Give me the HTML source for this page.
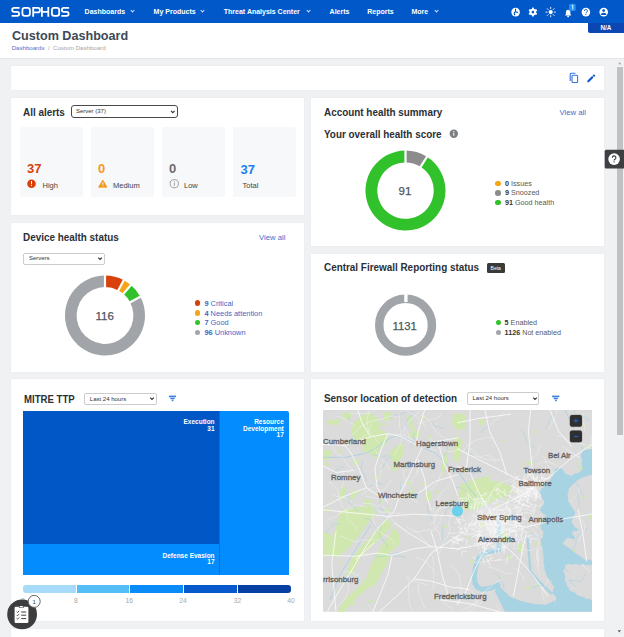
<!DOCTYPE html>
<html><head><meta charset="utf-8">
<style>
*{margin:0;padding:0;box-sizing:border-box}
html,body{width:624px;height:637px;overflow:hidden;background:#eff1f3;font-family:"Liberation Sans",sans-serif;position:relative}
.a{position:absolute;white-space:nowrap}
.hdr{left:0;top:0;width:624px;height:23px;background:#0158c8}
.nav{color:#fff;font-weight:bold;font-size:7px;top:7px;line-height:9px}
.chev{display:inline-block;width:3px;height:3px;border-right:1px solid #dfe8f8;border-bottom:1px solid #dfe8f8;transform:rotate(45deg);position:absolute}
.card{background:#fff;position:absolute;box-shadow:0 0 1.2px rgba(40,50,70,0.07)}
.h{font-weight:bold;font-size:11px;color:#2b2f36;line-height:12px;transform:scaleX(0.9);transform-origin:0 0}
.tile{position:absolute;background:#f7f8fa;border-radius:2px;top:127px;width:63.5px;height:70px}
.big{font-weight:bold;font-size:13px;line-height:14px;position:absolute}
.lbl{font-size:7.5px;color:#444;position:absolute;line-height:9px}
.sel{position:absolute;background:#fff;font-size:6px;color:#333;line-height:9px}
.lg{font-size:7.2px;line-height:9px;color:#3a67c7}
.lg b{font-weight:bold}
.lg[style*="585858"] b{color:#333}
.dot{display:inline-block;width:5.6px;height:5.6px;border-radius:50%;position:absolute}
.va{font-size:8px;color:#3a6fd0;line-height:10px}
</style></head><body>
<!-- header -->
<div class="a hdr"></div>
<svg class="a" style="left:0;top:0" width="80" height="23" viewBox="0 0 80 23"><g fill="none" stroke="#fff" stroke-width="1.8">
<path d="M19.6,7.9 H14.2 Q12.2,7.9 12.2,9.8 V10 Q12.2,11.9 14.2,11.9 H17.2 Q19.1,11.9 19.1,13.9 V14 Q19.1,15.9 17.2,15.9 H11.6"/>
<rect x="22.4" y="7.9" width="7.5" height="8" rx="2.3"/>
<path d="M33.2,16.8 V7.9 H37.9 Q39.9,7.9 39.9,9.9 V10.4 Q39.9,12.3 37.9,12.3 H33.2"/>
<path d="M41.9,7 V16.8 M48.3,7 V16.8 M41.9,11.9 H48.3"/>
<rect x="51.9" y="7.9" width="7.3" height="8" rx="2.3"/>
<path d="M69.1,7.9 H63.9 Q61.9,7.9 61.9,9.8 V10 Q61.9,11.9 63.9,11.9 H66.7 Q68.6,11.9 68.6,13.9 V14 Q68.6,15.9 66.7,15.9 H61.3"/>
</g></svg>
<div class="a nav" style="left:84.6px">Dashboards</div><span class="chev" style="left:131px;top:9px"></span>
<div class="a nav" style="left:153.6px">My Products</div><span class="chev" style="left:201px;top:9px"></span>
<div class="a nav" style="left:223.8px">Threat Analysis Center</div><span class="chev" style="left:307px;top:9px"></span>
<div class="a nav" style="left:329.6px">Alerts</div>
<div class="a nav" style="left:367.3px">Reports</div>
<div class="a nav" style="left:411.5px">More</div><span class="chev" style="left:434.5px;top:9px"></span>


<!-- title area -->
<div class="a" style="left:0;top:23px;width:624px;height:34.6px;background:#fff;box-shadow:0 0.8px 0.6px #e3e5e8"></div>
<div class="a" style="left:11.5px;top:28px;font-size:13.4px;font-weight:bold;color:#3d4956;line-height:15px;transform:scaleX(0.94);transform-origin:0 0">Custom Dashboard</div>
<div class="a" style="left:11.7px;top:43.8px;font-size:6.1px;line-height:7px;color:#4a72c8">Dashboards <span style="color:#a5a5a5">&nbsp;/&nbsp; Custom Dashboard</span></div>

<!-- N/A badge -->
<div class="a" style="left:588px;top:23px;width:36px;height:10px;background:#0b46b2;border-radius:0 0 0 2px;color:#fff;font-weight:bold;font-size:6.3px;line-height:10px;text-align:center">N/A</div>

<!-- toolbar card -->
<div class="card" style="left:11px;top:66px;width:593px;height:24px"></div>

<!-- All alerts -->
<div class="card" style="left:11px;top:97.8px;width:293px;height:117.4px"></div>
<div class="a h" style="left:23px;top:105.5px">All alerts</div>
<div class="sel" style="left:71.4px;top:105.4px;width:107px;height:12.4px;border:1.3px solid #4a4a4a;border-radius:3px;padding-left:3.5px;line-height:11.4px">Server (37)</div>
<div class="tile" style="left:19.5px"></div>
<div class="tile" style="left:90.5px"></div>
<div class="tile" style="left:161.5px"></div>
<div class="tile" style="left:232.5px"></div>
<div class="big" style="left:27px;top:162px;color:#d7420a">37</div>
<div class="big" style="left:98px;top:162px;color:#f59a1b">0</div>
<div class="big" style="left:169px;top:162px;color:#6b6b6b">0</div>
<div class="big" style="left:240.5px;top:163px;color:#1a7ff0">37</div>
<div class="lbl" style="left:42.5px;top:181px">High</div>
<div class="lbl" style="left:113px;top:181px">Medium</div>
<div class="lbl" style="left:184px;top:181px">Low</div>
<div class="lbl" style="left:242.5px;top:181px">Total</div>

<!-- Account health -->
<div class="card" style="left:311.3px;top:97.8px;width:292.7px;height:148.4px"></div>
<div class="a h" style="left:323.8px;top:105.7px">Account health summary</div>
<div class="a va" style="left:559.5px;top:108px;font-size:7.7px">View all</div>
<div class="a h" style="left:323.8px;top:127.5px">Your overall health score</div>

<!-- Device health -->
<div class="card" style="left:11px;top:222.5px;width:293px;height:149px"></div>
<div class="a h" style="left:23px;top:230.9px">Device health status</div>
<div class="a va" style="left:259px;top:233px;font-size:7.7px">View all</div>
<div class="sel" style="left:23.4px;top:252.6px;width:82px;height:12px;border:1px solid #ccc;border-radius:2px;padding-left:4.5px;line-height:9px">Servers</div>

<!-- Firewall -->
<div class="card" style="left:311.3px;top:254px;width:292.7px;height:117.5px"></div>
<div class="a h" style="left:323.8px;top:261.4px">Central Firewall Reporting status</div>
<div class="a" style="left:486.6px;top:263px;width:18.3px;height:10px;background:#3a3a3a;border-radius:1.5px;color:#fff;font-size:5px;line-height:10px;text-align:center">Beta</div>

<!-- MITRE -->
<div class="card" style="left:11px;top:378.7px;width:293px;height:242.5px"></div>
<div class="a h" style="left:24px;top:392.7px;font-size:10.7px">MITRE TTP</div>
<div class="sel" style="left:84.3px;top:392.6px;width:72.4px;height:12.2px;line-height:10.2px;border:1px solid #ccc;border-radius:2px;padding-left:4.5px">Last 24 hours</div>

<!-- Sensor -->
<div class="card" style="left:311.3px;top:378.7px;width:292.7px;height:242.5px"></div>
<div class="a h" style="left:323.7px;top:391.9px">Sensor location of detection</div>
<div class="sel" style="left:467px;top:392.4px;width:72.4px;height:12.4px;line-height:10.4px;border:1px solid #ccc;border-radius:2px;padding-left:4.5px">Last 24 hours</div>


<!-- treemap -->
<div class="a" style="left:23.2px;top:410.8px;width:265.8px;height:164.2px;background:#028cfe;border-radius:0 2px 0 0;overflow:hidden">
 <div class="a" style="left:0;top:0;width:196.2px;height:133.6px;background:#0257c7"></div>
 <div class="a" style="left:196.2px;top:0;width:0.7px;height:164.2px;background:#2a66ad"></div>
</div>
<div class="a" style="left:150px;top:419.2px;width:64.6px;text-align:right;color:#fff;font-weight:bold;font-size:6.5px;line-height:6.4px">Execution<br>31</div>
<div class="a" style="left:220px;top:419.2px;width:63.8px;text-align:right;color:#fff;font-weight:bold;font-size:6.5px;line-height:6.4px">Resource<br>Development<br>17</div>
<div class="a" style="left:120px;top:553px;width:94.6px;text-align:right;color:#fff;font-weight:bold;font-size:6.5px;line-height:6.4px">Defense Evasion<br>17</div>
<!-- color scale -->
<div class="a" style="left:23.2px;top:584.8px;width:267.8px;height:7.8px;border-radius:3px;overflow:hidden;background:#fff">
 <div class="a" style="left:0;top:0;width:52.6px;height:7.8px;background:#a6dcf9"></div>
 <div class="a" style="left:53.6px;top:0;width:52.4px;height:7.8px;background:#55bef8"></div>
 <div class="a" style="left:107px;top:0;width:52.9px;height:7.8px;background:#0a8cf8"></div>
 <div class="a" style="left:160.9px;top:0;width:53.4px;height:7.8px;background:#0759cc"></div>
 <div class="a" style="left:215.3px;top:0;width:52.5px;height:7.8px;background:#083fa3"></div>
</div>
<div class="a" style="left:60.8px;top:597px;width:30px;text-align:center;font-size:6.8px;line-height:8px;color:#a8a8a8">8</div>
<div class="a" style="left:114.2px;top:597px;width:30px;text-align:center;font-size:6.8px;line-height:8px;color:#a8a8a8">16</div>
<div class="a" style="left:168.1px;top:597px;width:30px;text-align:center;font-size:6.8px;line-height:8px;color:#a8a8a8">24</div>
<div class="a" style="left:222.5px;top:597px;width:30px;text-align:center;font-size:6.8px;line-height:8px;color:#a8a8a8">32</div>
<div class="a" style="left:276px;top:597px;width:30px;text-align:center;font-size:6.8px;line-height:8px;color:#a8a8a8">40</div>

<!--MAP--><svg class="a" style="left:323px;top:410.2px" width="269" height="201.6" viewBox="323 410.2 269 201.6">
<rect x="323" y="410" width="269" height="202" fill="#dbdbdb"/>
<polygon fill="#d0e8b0" points="340.6,510.5 354.6,507.9 372.2,505.3 375.7,514.1 365.2,526.4 356.4,538.7 347.6,549.2 337.1,558.0 328.3,556.2 331.8,538.7 337.1,524.6"/>
<polygon fill="#d0e8b0" points="386.3,519.3 392.4,524.6 381.0,538.7 366.9,551.0 359.9,559.8 352.9,573.8 345.8,575.6 351.1,559.8 361.7,545.7 375.7,531.6"/>
<polygon fill="#d0e8b0" points="393.3,528.1 400.3,535.1 398.6,545.7 389.8,552.7 388.0,563.3 381.0,573.8 375.7,584.4 363.4,591.4 352.9,601.9 344.1,612.0 337.1,612.0 345.8,598.4 358.1,587.9 366.9,577.3 370.5,566.8 377.5,552.7 382.8,543.9 389.8,535.1"/>
<polygon fill="#d0e8b0" points="323.0,531.6 331.8,535.1 330.0,552.7 323.0,558.0"/>
<polygon fill="#d0e8b0" points="352.9,423.4 360.3,416.0 370.8,413.0 378.2,419.0 379.7,429.4 385.7,432.4 388.7,441.3 379.7,448.8 376.7,459.3 370.8,454.8 363.3,451.8 361.8,442.8 354.3,439.9 351.4,432.4"/>
<polygon fill="#d0e8b0" points="342.4,413.0 352.9,413.0 351.0,419.0 343.0,420.0"/>
<polygon fill="#d0e8b0" points="327.5,421.0 340.9,419.0 339.0,425.0 328.0,425.0"/>
<polygon fill="#d0e8b0" points="382.7,413.0 391.7,412.0 392.0,420.4 384.0,421.0"/>
<polygon fill="#d0e8b0" points="388.7,453.3 397.6,445.8 403.0,442.8 403.0,454.8 397.6,463.7 394.6,472.7 391.7,469.7 393.1,459.3"/>
<polygon fill="#d0e8b0" points="323.0,450.3 332.0,450.3 329.0,459.3 323.0,460.7"/>
<polygon fill="#d0e8b0" points="339.4,493.6 345.4,484.6 346.9,490.6 340.9,501.0"/>
<polygon fill="#d0e8b0" points="349.9,496.6 355.8,487.6 357.3,495.0 351.4,501.0"/>
<polygon fill="#d0e8b0" points="363.3,499.6 370.8,499.0 370.8,505.0 364.0,505.0"/>
<polygon fill="#d0e8b0" points="352.9,459.3 358.8,460.0 358.0,465.2 353.0,465.0"/>
<polygon fill="#d0e8b0" points="453.4,413.1 465.9,414.7 465.9,428.8 458.1,430.4 451.8,424.1"/>
<polygon fill="#d0e8b0" points="454.9,435.1 462.8,441.4 459.7,460.2 454.9,463.4 453.4,454.0"/>
<polygon fill="#d0e8b0" points="445.5,454.0 448.7,447.7 447.1,463.4 442.4,475.9 440.8,469.7"/>
<polygon fill="#d0e8b0" points="459.7,485.4 475.4,479.1 490.0,475.9 490.0,493.2 481.6,504.2 467.5,510.0 459.7,504.2"/>
<polygon fill="#d0e8b0" points="400.0,444.5 403.0,446.0 403.0,457.1 400.0,457.0"/>
<polygon fill="#d0e8b0" points="406.3,416.3 410.0,415.0 415.7,430.4 411.0,430.0"/>
<polygon fill="#d0e8b0" points="409.4,432.0 420.4,430.4 418.0,438.3 410.0,437.0"/>
<polygon fill="#d0e8b0" points="478.5,419.4 484.8,420.0 484.0,425.7 479.0,425.0"/>
<polygon fill="#d0e8b0" points="425.1,491.6 431.0,492.0 431.4,501.0 426.0,500.0"/>
<polygon fill="#d0e8b0" points="466.0,484.0 480.0,480.0 500.0,482.0 512.0,487.0 508.0,496.0 496.0,500.0 484.0,506.0 472.0,511.0 462.0,509.0"/>
<polygon fill="#d0e8b0" points="500.0,535.0 506.0,532.0 509.0,540.0 503.0,543.0"/>
<polygon fill="#d0e8b0" points="517.0,545.0 523.0,543.0 524.0,552.0 518.0,553.0"/>
<g fill="#d0e8b0">
<circle cx="336.0" cy="590.6" r="0.9"/>
<circle cx="352.7" cy="603.3" r="2.2"/>
<circle cx="464.3" cy="410.5" r="1.1"/>
<circle cx="468.4" cy="537.9" r="1.6"/>
<circle cx="590.2" cy="517.0" r="2.0"/>
<circle cx="580.5" cy="425.6" r="2.2"/>
<circle cx="383.2" cy="424.6" r="1.8"/>
<circle cx="327.1" cy="464.3" r="2.2"/>
<circle cx="375.8" cy="419.7" r="1.9"/>
<circle cx="579.1" cy="464.0" r="1.3"/>
<circle cx="334.1" cy="501.7" r="1.2"/>
<circle cx="412.0" cy="492.9" r="2.2"/>
<circle cx="523.5" cy="464.3" r="1.4"/>
<circle cx="468.3" cy="487.4" r="1.0"/>
<circle cx="527.7" cy="588.1" r="1.9"/>
<circle cx="387.3" cy="511.2" r="2.2"/>
<circle cx="509.6" cy="557.5" r="2.2"/>
<circle cx="346.4" cy="535.4" r="0.8"/>
<circle cx="515.7" cy="492.0" r="1.6"/>
<circle cx="507.2" cy="499.4" r="1.7"/>
<circle cx="445.5" cy="526.7" r="1.5"/>
<circle cx="497.1" cy="505.1" r="1.3"/>
<circle cx="469.9" cy="486.7" r="2.0"/>
<circle cx="535.9" cy="585.6" r="1.3"/>
<circle cx="340.2" cy="607.1" r="1.2"/>
<circle cx="500.4" cy="576.9" r="0.9"/>
<circle cx="537.5" cy="544.2" r="2.1"/>
<circle cx="528.9" cy="463.0" r="2.0"/>
<circle cx="481.6" cy="525.3" r="2.2"/>
<circle cx="340.7" cy="563.0" r="1.3"/>
<circle cx="378.1" cy="444.2" r="1.3"/>
<circle cx="504.2" cy="440.8" r="1.7"/>
<circle cx="370.8" cy="601.4" r="2.0"/>
<circle cx="409.6" cy="483.1" r="2.0"/>
<circle cx="438.1" cy="492.8" r="1.8"/>
<circle cx="423.9" cy="483.7" r="1.7"/>
<circle cx="463.6" cy="471.1" r="1.7"/>
<circle cx="397.0" cy="468.7" r="1.4"/>
<circle cx="353.1" cy="538.2" r="1.8"/>
<circle cx="369.9" cy="514.5" r="0.8"/>
<circle cx="358.1" cy="508.7" r="1.7"/>
<circle cx="490.5" cy="515.7" r="1.9"/>
<circle cx="391.0" cy="522.4" r="0.8"/>
<circle cx="392.9" cy="529.3" r="1.2"/>
<circle cx="469.5" cy="595.2" r="1.2"/>
<circle cx="394.4" cy="498.5" r="1.5"/>
<circle cx="455.7" cy="427.9" r="1.0"/>
<circle cx="580.8" cy="468.7" r="1.9"/>
<circle cx="424.1" cy="418.4" r="1.9"/>
<circle cx="583.9" cy="497.1" r="1.7"/>
<circle cx="392.1" cy="458.2" r="2.0"/>
<circle cx="357.8" cy="534.9" r="2.2"/>
<circle cx="340.0" cy="451.0" r="2.0"/>
<circle cx="344.5" cy="500.0" r="1.4"/>
<circle cx="434.6" cy="599.0" r="1.7"/>
<circle cx="535.9" cy="431.8" r="1.6"/>
<circle cx="574.5" cy="551.6" r="1.4"/>
<circle cx="590.6" cy="445.6" r="0.9"/>
<circle cx="430.0" cy="437.3" r="1.9"/>
<circle cx="325.6" cy="456.9" r="1.1"/>
<circle cx="468.7" cy="597.0" r="1.2"/>
<circle cx="411.8" cy="488.3" r="1.4"/>
<circle cx="347.2" cy="581.3" r="1.6"/>
<circle cx="327.2" cy="510.4" r="2.0"/>
<circle cx="381.0" cy="501.8" r="2.0"/>
<circle cx="376.8" cy="477.8" r="2.0"/>
<circle cx="471.1" cy="561.1" r="2.0"/>
<circle cx="360.7" cy="492.2" r="0.9"/>
<circle cx="491.5" cy="474.7" r="1.1"/>
<circle cx="587.2" cy="447.6" r="1.6"/>
</g>
<g fill="none" stroke="#a9d1e2" stroke-width="0.6" stroke-linejoin="round">
<path d="M390.1,418.9 L391.3,417.3 L394.0,416.2 L396.2,415.1 L400.2,415.3 L403.0,413.5 L406.1,412.5 L408.6,411.3 L410.6,411.1 L412.7,411.9"/>
<path d="M368.7,486.6 L371.4,486.3 L375.0,485.1 L377.8,483.3 L380.6,483.6 L383.0,485.5"/>
<path d="M427.2,504.3 L427.4,507.7 L428.0,509.9 L428.0,512.1 L429.1,515.6 L431.3,517.5 L432.6,520.9"/>
<path d="M365.8,481.3 L365.9,478.1 L365.1,475.3 L362.7,472.4 L361.0,468.9 L361.8,465.8 L362.5,461.9"/>
<path d="M466.8,491.6 L465.0,490.4 L462.4,488.6 L459.0,487.7 L455.7,487.3"/>
<path d="M475.7,472.8 L472.5,474.2 L470.8,475.9 L468.7,476.4"/>
<path d="M568.8,572.6 L567.4,570.4 L565.6,569.1"/>
<path d="M531.5,588.3 L533.7,587.7 L537.0,586.2 L540.7,585.5 L543.0,582.9"/>
<path d="M384.2,510.6 L381.3,509.4 L380.1,507.6 L379.3,504.4 L380.6,500.8 L382.1,497.8 L385.1,496.3"/>
<path d="M333.0,474.3 L334.1,472.5 L336.1,470.5 L339.4,469.0 L341.0,467.5 L343.8,467.2"/>
<path d="M573.2,549.7 L574.5,546.7 L575.9,543.6 L575.9,540.3 L577.5,537.2 L578.6,535.0 L581.9,533.4 L584.1,532.5 L586.4,529.9 L587.3,527.5"/>
<path d="M582.2,443.9 L581.7,446.5 L582.8,449.8"/>
<path d="M388.0,514.1 L385.8,515.5 L383.5,515.5 L380.9,515.3 L378.2,513.8 L376.7,512.0 L375.3,509.1 L373.5,506.0 L373.4,503.8"/>
<path d="M400.8,482.8 L400.1,485.3 L400.8,487.8 L399.9,490.0"/>
<path d="M442.7,525.0 L443.4,526.9 L442.3,530.2 L443.1,533.5 L441.8,536.4 L442.2,539.3 L442.7,541.6 L443.0,543.6"/>
<path d="M410.9,447.3 L411.1,445.0 L413.4,442.2 L414.1,440.2 L413.4,436.6 L414.8,432.9"/>
<path d="M431.5,420.2 L432.0,422.5 L433.4,425.3 L436.4,426.9 L439.3,426.9 L441.0,428.3 L443.9,428.4"/>
<path d="M374.3,556.0 L377.9,556.7 L380.2,557.1 L382.1,556.3 L385.9,555.8 L387.4,554.5 L389.7,554.3 L392.4,554.9 L395.6,553.2 L398.7,552.6"/>
<path d="M449.1,519.6 L446.4,517.0 L445.2,513.2 L446.3,510.2 L447.8,508.7 L450.6,507.0 L452.8,504.7"/>
<path d="M579.3,507.1 L578.9,504.1 L579.1,500.4 L578.0,497.1 L577.8,494.8 L577.9,491.7"/>
<path d="M576.7,482.7 L577.2,484.9 L579.5,487.9 L580.7,489.8 L580.9,492.3 L582.7,494.7 L585.2,496.3"/>
<path d="M472.0,455.8 L469.3,453.1 L467.0,450.2 L465.4,446.9"/>
<path d="M359.1,511.6 L357.1,510.8 L355.5,507.7 L352.3,505.8 L350.2,505.0 L348.6,502.3 L348.2,500.0 L348.7,498.0 L348.3,495.3 L346.0,493.1"/>
<path d="M380.3,470.6 L381.0,468.5 L383.0,467.2 L384.5,464.1 L385.2,461.4 L387.5,458.7 L389.3,457.7"/>
<path d="M391.8,458.3 L389.1,456.1 L385.9,455.9 L383.2,457.3 L381.0,457.5 L378.1,455.8 L375.8,455.3 L372.1,454.9"/>
<path d="M479.4,432.9 L481.6,431.8 L483.9,428.7 L486.9,427.3"/>
<path d="M542.3,536.0 L540.2,536.3 L536.9,536.2 L533.2,535.6 L530.9,533.1"/>
<path d="M443.7,456.3 L445.4,454.3 L446.6,450.7 L447.5,448.8 L447.4,446.1 L447.2,442.9 L446.6,440.3 L444.1,438.4"/>
<path d="M412.8,414.1 L411.3,415.9 L409.3,417.5 L407.6,419.9 L406.8,423.0 L405.6,426.7 L403.9,427.8 L400.7,429.5"/>
<path d="M543.4,557.5 L542.5,554.2 L540.8,551.2"/>
<path d="M503.7,588.5 L503.7,586.0 L502.8,583.5 L501.3,582.2 L500.3,579.4 L499.0,576.6 L497.5,574.8 L495.0,574.1"/>
<path d="M406.0,556.8 L403.7,557.4 L400.7,556.4 L398.0,556.3 L394.0,556.3 L390.7,555.4"/>
<path d="M571.0,579.4 L570.7,581.9 L571.9,583.9 L574.5,586.1 L577.2,586.9"/>
<path d="M376.9,531.8 L377.3,529.3 L376.3,527.3 L374.4,526.3 L372.4,523.8 L371.8,521.9 L369.7,519.4 L367.1,518.8 L364.8,519.9"/>
<path d="M556.4,415.5 L553.8,415.0 L551.2,416.3 L549.7,419.2 L549.0,422.1 L548.1,424.4 L547.4,426.3 L544.9,428.2"/>
<path d="M588.6,421.3 L587.8,419.2 L585.7,418.0 L582.5,416.1 L580.0,415.1 L576.6,414.7 L574.8,413.3 L574.0,410.2"/>
<path d="M347.2,415.6 L348.7,417.5 L349.4,420.0 L349.8,423.4"/>
<path d="M567.6,581.8 L570.5,580.9 L573.1,580.5 L575.9,581.4 L579.7,581.6 L582.8,579.9 L584.2,577.0 L585.4,573.4"/>
<path d="M339.1,524.0 L335.9,523.8 L333.5,524.6 L331.3,526.4 L330.0,528.4 L327.5,530.5 L325.2,533.7"/>
<path d="M381.3,525.0 L381.2,528.6 L379.8,530.4 L379.0,532.4 L380.2,536.0 L381.8,538.0 L383.7,541.4 L385.4,542.7 L387.2,545.9 L387.6,548.0"/>
<path d="M531.2,498.7 L528.7,498.0 L526.6,498.8 L524.7,498.2 L523.2,496.5"/>
<path d="M521.0,429.7 L522.7,431.9 L524.2,434.9 L525.7,437.1 L525.8,440.3 L527.3,443.2 L529.4,444.2 L532.0,445.8 L534.3,448.4"/>
</g>
<polygon fill="#a8d3e3" points="592.0,449.0 589.9,449.8 587.7,449.5 585.6,450.1 583.4,450.2 582.3,452.2 581.3,454.3 580.6,456.5 581.7,458.7 582.2,461.0 581.7,463.4 581.7,466.1 582.9,468.6 581.5,470.5 579.8,472.1 577.7,473.3 575.0,473.4 573.1,475.2 570.7,476.1 568.3,474.7 565.6,474.4 564.1,471.8 562.7,469.2 560.5,468.4 558.1,468.1 554.6,469.8 554.8,472.0 553.6,474.0 553.4,476.1 551.3,477.6 550.3,479.9 548.8,481.9 547.1,483.0 545.7,484.6 545.1,486.8 543.1,487.7 541.0,489.7 539.6,492.3 540.8,495.0 541.5,497.4 542.8,499.5 544.1,501.6 544.2,504.2 542.2,505.7 541.2,508.1 539.6,510.0 541.1,511.8 542.6,513.4 544.5,514.6 546.5,515.8 544.7,517.2 544.4,519.6 542.6,521.0 542.0,523.2 540.8,525.0 540.5,527.2 541.1,529.3 542.9,531.1 543.3,533.2 543.1,535.4 542.8,537.5 540.8,538.9 540.8,541.1 541.4,543.4 541.5,545.8 542.5,548.0 542.6,550.4 543.1,552.7 543.5,554.7 543.7,556.8 543.5,558.9 543.7,560.9 543.3,563.0 544.2,565.0 544.4,567.6 544.5,570.2 545.8,572.5 546.2,574.7 546.9,576.8 548.4,578.5 549.6,580.3 551.4,581.5 551.7,583.9 552.9,585.6 554.8,586.7 553.3,588.6 553.0,590.9 552.2,593.1 553.9,595.3 556.1,597.0 556.4,599.1 555.0,601.0 555.2,603.2 555.4,605.3 554.8,607.3 556.8,609.3 557.4,612.0 559.4,612.0 561.5,612.0 563.5,612.0 565.5,612.0 567.6,612.0 569.6,612.0 571.6,612.0 573.7,612.0 575.7,612.0 577.8,612.0 579.8,612.0 581.8,612.0 583.9,612.0 585.9,612.0 587.9,612.0 590.0,612.0 592.0,612.0 592.0,609.8 592.0,607.6 592.0,605.4 592.0,603.2 592.0,601.0 590.4,599.7 588.6,598.7 586.1,599.5 584.7,597.5 582.6,597.3 580.6,596.5 578.5,595.9 576.6,594.7 575.1,593.0 573.2,591.9 571.0,591.5 569.2,590.0 568.9,587.6 566.9,586.2 566.8,583.7 565.3,582.0 564.6,579.7 565.2,577.3 565.0,575.0 563.8,572.8 563.4,570.5 565.2,568.0 565.3,565.0 567.4,564.7 569.4,564.2 571.5,565.2 573.5,564.2 575.6,564.5 577.6,564.8 579.7,565.2 581.7,564.4 583.8,564.2 585.8,565.7 587.9,564.7 589.9,565.8 592.0,565.0 592.0,563.0 592.0,561.0 589.7,559.8 587.0,560.3 584.6,559.6 582.8,558.5 581.2,557.3 579.6,555.9 577.7,555.0 575.9,553.5 574.0,552.2 572.2,550.7 570.7,548.8 568.4,548.1 566.5,546.5 564.5,545.1 562.7,543.4 564.7,541.3 566.1,538.8 568.4,538.3 570.8,538.4 573.1,539.7 575.4,538.8 574.3,536.9 573.1,535.0 571.9,533.1 573.6,531.4 575.9,531.2 578.0,530.6 580.0,529.6 577.7,529.6 576.2,527.9 574.2,527.3 573.7,524.9 571.9,523.0 571.9,520.4 573.0,518.5 573.6,516.3 574.8,514.5 575.4,512.3 573.6,510.5 572.6,508.2 570.7,506.5 570.4,504.1 568.5,502.1 567.9,499.8 568.3,497.2 567.3,495.0 568.7,492.7 568.4,490.0 569.6,487.8 571.4,486.1 573.0,484.2 575.1,482.9 576.9,481.0 578.9,479.7 581.1,478.4 583.2,477.4 585.4,476.8 587.7,476.5 589.7,475.3 592.0,475.0 592.0,473.0 592.0,471.0 592.0,469.0 592.0,467.0 592.0,465.0 592.0,463.0 592.0,461.0 592.0,459.0 592.0,457.0 592.0,455.0 592.0,453.0 592.0,451.0"/>
<polygon fill="#a8d3e3" points="497.0,585.0 503.0,590.0 510.0,597.0 520.0,601.0 533.0,604.0 546.0,605.0 554.0,601.0 558.0,612.0 505.0,612.0 500.0,602.0 495.0,592.0"/>
<path d="M499.2,522 L499.2,550 Q485,551 480,557 Q474,566 474.5,579 Q475,588 482,589.5 Q492,589 500,584" fill="none" stroke="#a8d3e3" stroke-width="5" stroke-linejoin="round"/>
<path d="M527.4,537.8 L530.4,571.3 L538,580.4 L547.2,589.6 L551.8,594.1" fill="none" stroke="#a8d3e3" stroke-width="2.2"/>
<g fill="none" stroke="#a8d3e3" stroke-width="0.9" stroke-linejoin="round">
<path d="M323.0,457.6 L344.6,457.6 L366.3,453.3 L374.9,448.9 L383.6,442.5 L394.4,436.0 L409.5,440.3 L420.4,446.8 L435.5,453.3 L448.5,466.3 L458.0,470.6 L470.0,490.0 L485.0,505.0 L499.0,522.0"/>
<path d="M370.6,525.1 L353.3,553.3 L340.0,575.0 L330.0,600.0"/>
<path d="M565.0,410.0 L572.0,425.0 L578.0,438.0"/>
</g>
<defs><radialGradient id="urb"><stop offset="0" stop-color="#fff" stop-opacity="0.45"/><stop offset="0.6" stop-color="#fff" stop-opacity="0.2"/><stop offset="1" stop-color="#fff" stop-opacity="0"/></radialGradient></defs>
<ellipse cx="494" cy="524" rx="34" ry="30" fill="url(#urb)"/>
<ellipse cx="526" cy="491" rx="16" ry="14" fill="url(#urb)"/>
<g fill="none" stroke="#f4f4f4" stroke-width="0.6" stroke-opacity="0.75" stroke-linejoin="round">
<path d="M410.1,440.5 L409.2,437.9 L408.0,433.3 L406.7,430.9 L404.9,428.3 L403.6,426.1"/>
<path d="M475.1,601.4 L472.9,598.7 L472.3,596.1 L472.5,592.9 L471.8,590.2"/>
<path d="M406.0,574.9 L408.0,578.2 L410.1,579.7 L414.1,581.2 L417.2,582.2 L420.6,583.5 L425.0,584.4 L427.9,585.5"/>
<path d="M477.5,516.1 L480.3,512.0 L481.2,508.6 L482.5,506.0 L483.7,503.7 L486.3,500.1 L489.3,496.5 L491.4,492.8 L493.6,489.6 L496.1,485.7 L499.1,483.6 L501.5,482.5"/>
<path d="M511.7,540.7 L515.1,539.9 L517.6,539.7 L520.5,539.3 L522.9,538.2 L525.6,537.5 L528.8,536.0 L531.4,535.7 L535.3,535.1 L539.7,535.9 L542.5,537.5"/>
<path d="M578.6,542.3 L579.9,538.0 L582.6,534.4 L584.3,531.4 L585.1,527.4 L584.5,524.8 L583.2,522.2 L581.6,520.1 L579.1,518.7 L575.7,518.2"/>
<path d="M390.9,480.2 L389.5,483.6 L386.9,486.2 L385.2,488.5 L381.9,491.4 L378.7,494.2"/>
<path d="M461.9,451.5 L465.0,449.2 L467.0,445.9 L470.8,443.2 L473.6,441.9 L476.1,440.3 L479.7,439.2 L483.1,439.0 L487.4,437.6 L492.0,438.1"/>
<path d="M539.8,575.3 L538.6,571.8 L538.0,566.8 L538.5,563.2 L537.9,559.2 L536.7,554.9 L536.4,551.5 L537.3,549.0"/>
<path d="M350.5,505.0 L347.6,508.7 L344.5,510.8 L340.5,512.8 L337.7,515.9 L333.7,517.9 L330.1,518.8 L326.3,521.1"/>
<path d="M357.2,440.5 L360.7,438.6 L364.9,436.2 L367.5,433.4 L368.9,429.1 L370.2,426.7 L372.1,424.6"/>
<path d="M588.4,449.4 L590.1,446.6 L591.3,442.8 L591.7,439.3 L590.6,434.7"/>
<path d="M418.2,502.5 L413.9,500.5 L410.4,498.8 L408.1,497.6 L405.4,496.4 L401.0,496.5 L397.5,497.7 L393.6,498.1 L389.9,499.2 L385.6,500.2 L382.3,502.3 L380.1,504.6 L376.9,506.6"/>
<path d="M474.1,563.5 L477.9,560.3 L480.3,558.6 L482.9,555.9 L486.1,553.9 L488.9,551.3 L493.3,549.3 L498.0,549.1 L501.5,548.0 L504.7,546.7 L508.3,544.5 L510.7,542.8"/>
<path d="M404.4,434.7 L403.7,430.1 L404.5,427.1 L406.7,424.4 L409.8,420.5 L412.2,418.8 L415.2,416.5 L417.2,414.3 L419.6,410.7"/>
<path d="M441.5,413.7 L440.2,416.0 L436.5,418.5 L433.8,419.0 L431.4,420.0 L428.2,420.5 L425.1,422.1 L420.6,422.6 L417.8,423.6"/>
<path d="M394.1,434.6 L398.9,434.6 L401.5,434.9 L406.2,436.3 L408.5,438.3 L412.9,440.4 L416.2,442.4 L419.7,443.4 L422.5,444.7 L426.3,448.0 L428.7,448.7 L433.5,450.2 L436.4,451.1"/>
<path d="M443.3,543.0 L440.6,539.0 L440.1,535.8 L438.9,533.0 L435.9,529.4 L434.5,526.9 L434.3,521.9 L435.0,519.5 L436.7,515.1 L437.5,512.6 L439.0,509.5 L441.2,505.1"/>
<path d="M484.1,549.9 L487.7,549.8 L492.5,548.7 L496.3,549.4 L501.2,549.2 L504.5,548.5 L507.2,546.4"/>
<path d="M450.7,511.6 L450.8,514.3 L450.2,517.1 L449.2,520.4 L448.7,524.4 L449.9,529.2 L449.7,532.1 L447.8,536.1 L445.7,540.0 L443.3,542.8 L441.3,546.4 L440.4,550.8 L439.0,554.3"/>
<path d="M438.5,551.6 L434.7,550.6 L432.5,549.3 L429.1,546.3 L426.1,542.5 L424.7,540.2 L421.3,537.8 L419.6,534.9 L418.1,532.7 L414.9,530.6 L411.9,529.6 L409.3,528.9 L405.6,525.9"/>
<path d="M347.7,516.3 L347.1,513.6 L345.1,509.8 L342.3,506.5 L341.2,503.0 L339.7,499.6 L338.7,495.3 L338.1,491.2 L336.7,488.7 L333.8,485.5 L330.7,483.1 L328.1,482.5"/>
<path d="M395.3,545.7 L393.3,542.5 L391.3,539.5 L387.5,536.6 L382.9,534.8 L381.1,533.0 L377.7,530.0 L376.2,526.7 L374.4,524.3 L373.7,521.3 L373.3,518.5 L372.7,513.6"/>
<path d="M358.7,575.7 L355.7,575.0 L352.6,572.9 L350.1,572.5 L346.6,571.9 L343.7,571.9"/>
<path d="M415.5,473.8 L416.9,470.8 L418.4,466.2 L418.5,463.6 L419.3,460.6"/>
<path d="M340.5,488.8 L342.6,485.9 L343.7,483.5 L344.0,479.0 L343.4,474.2 L342.3,471.2"/>
<path d="M460.4,448.3 L456.4,450.3 L451.8,451.9 L448.0,451.6 L445.4,450.9 L442.2,449.3 L439.1,446.7 L436.8,445.4 L435.0,443.2 L432.8,440.6 L429.5,437.9"/>
<path d="M579.9,456.7 L576.3,455.8 L572.9,453.9 L569.9,452.4 L567.2,450.0 L565.0,447.9 L561.5,446.2"/>
<path d="M408.9,484.4 L411.8,481.1 L413.9,478.3 L416.0,475.6 L417.3,473.3 L418.9,468.6 L418.8,464.8 L419.3,460.2"/>
<path d="M381.1,464.7 L380.7,468.3 L380.9,472.8 L379.8,475.5 L378.5,479.7 L375.8,483.8 L374.4,486.0 L370.4,488.8 L367.4,490.8 L363.8,493.5 L362.0,495.7"/>
<path d="M584.4,432.0 L584.9,427.6 L583.9,424.9 L583.2,422.4 L582.7,417.6 L582.8,413.7"/>
<path d="M408.1,579.6 L409.0,582.6 L408.4,586.8 L408.6,589.3 L408.8,593.5 L409.1,596.6 L409.0,601.4 L409.5,604.0 L410.8,607.3 L411.4,610.2"/>
<path d="M543.6,456.6 L545.6,460.1 L547.6,464.4 L549.7,468.7 L552.7,471.4"/>
<path d="M514.5,473.5 L516.0,476.4 L519.4,480.0 L520.7,482.2 L522.0,485.4 L523.6,488.3"/>
<path d="M368.5,410.6 L368.0,415.3 L367.2,419.6 L367.0,424.0 L367.5,428.5 L369.4,432.3 L372.1,435.1 L374.4,437.4 L376.5,440.4 L377.9,443.2"/>
<path d="M491.2,491.8 L489.4,496.2 L488.6,500.5 L486.9,503.4 L485.3,508.0 L484.0,510.9 L482.1,513.5 L481.0,515.8 L478.1,519.6 L474.7,523.0 L473.6,525.9 L472.0,530.6"/>
<path d="M579.6,488.1 L578.8,490.8 L578.1,493.2 L576.0,495.8 L573.9,497.7 L571.2,501.5"/>
<path d="M366.2,496.2 L368.7,497.3 L372.4,497.7 L375.9,498.6 L379.4,498.8 L383.6,499.4"/>
<path d="M524.2,581.1 L523.3,578.0 L521.8,575.2 L519.8,572.8 L517.7,570.6 L515.0,568.9"/>
<path d="M567.1,448.0 L569.6,450.9 L573.3,453.4 L577.0,456.8 L580.4,458.2"/>
<path d="M479.9,597.9 L477.8,600.3 L473.8,603.0 L471.5,606.3 L469.4,608.5 L467.8,610.9"/>
<path d="M484.2,541.6 L484.3,545.2 L484.8,549.2 L486.0,551.4 L487.8,554.7"/>
<path d="M432.8,570.8 L431.7,568.3 L428.9,565.1 L426.6,562.8 L422.6,560.1 L419.0,558.4 L415.6,557.4"/>
<path d="M429.7,525.7 L432.2,523.4 L433.6,520.9 L434.0,517.4 L435.6,513.2 L437.5,510.6 L439.6,509.0 L442.8,508.2 L446.8,507.5 L450.4,505.2 L454.8,503.5 L459.3,502.4 L463.3,501.8"/>
<path d="M375.8,505.5 L372.2,504.3 L369.4,503.7 L365.1,503.8 L362.7,502.9"/>
<path d="M474.3,563.0 L478.2,562.6 L482.3,562.3 L485.8,561.5 L489.3,561.0 L492.9,560.9 L495.4,560.7 L499.2,560.8 L503.5,560.0 L507.1,560.1"/>
<path d="M371.3,505.6 L374.2,507.4 L376.8,510.1 L378.3,512.2 L382.2,515.1 L386.0,517.0 L390.4,517.3"/>
<path d="M569.4,443.4 L568.9,440.0 L569.1,437.1 L570.5,434.2 L572.4,432.1 L575.6,428.5 L577.0,425.7 L578.4,422.7"/>
<path d="M332.9,446.8 L334.7,451.2 L337.6,454.6 L340.9,456.5 L343.6,458.6 L345.7,461.8 L348.0,465.9 L351.8,469.2 L354.2,471.7"/>
<path d="M537.6,463.5 L541.9,462.7 L544.8,462.0 L547.4,461.9 L550.4,462.8 L555.0,464.7 L558.7,466.6"/>
<path d="M407.1,410.4 L411.2,410.5 L414.6,410.3"/>
<path d="M466.7,493.5 L466.5,497.5 L466.4,500.4 L465.1,503.2 L464.8,505.9 L463.7,510.5 L462.0,513.6"/>
<path d="M340.2,536.4 L342.6,536.8 L346.5,538.8 L350.5,540.6 L353.3,541.8 L356.4,541.9 L359.5,540.7 L363.7,540.0 L367.9,540.7 L371.8,540.5 L376.2,540.0 L379.4,539.7"/>
<path d="M495.7,605.0 L497.6,607.5 L501.0,610.3"/>
<path d="M490.5,425.7 L492.0,423.4 L493.9,421.2 L497.7,419.4 L499.6,417.2 L501.5,415.5 L502.7,413.1"/>
<path d="M548.0,580.1 L546.5,583.9 L544.1,587.1 L542.8,589.6 L542.4,593.9 L542.9,597.2 L543.5,599.7 L544.9,602.6"/>
<path d="M515.5,484.3 L514.2,487.3 L511.5,490.9 L510.7,494.6 L511.2,498.2 L513.2,501.5 L514.8,505.8 L515.7,508.9 L517.0,512.5 L519.2,516.3 L521.9,518.3 L526.0,519.4 L530.2,522.0"/>
<path d="M482.4,603.4 L479.4,603.7 L475.6,603.4 L471.7,604.5 L468.1,607.2 L464.2,609.2 L461.0,610.4"/>
<path d="M430.9,489.7 L433.9,486.9 L436.0,484.4 L438.3,481.3 L439.9,476.6 L442.1,472.2"/>
<path d="M357.1,530.0 L355.5,527.1 L352.1,524.0 L349.3,520.6 L346.4,518.6"/>
<path d="M531.1,527.0 L533.6,530.4 L535.5,532.9 L537.4,537.1 L538.7,541.2 L538.2,545.5 L537.5,548.8 L537.6,553.7 L538.8,558.4 L538.2,561.2 L537.2,564.1 L537.1,566.9"/>
<path d="M404.3,470.1 L403.5,472.7 L403.5,476.2 L404.9,479.4 L405.5,483.6 L406.1,487.6"/>
<path d="M447.6,438.6 L444.6,438.0 L440.9,435.9 L437.5,433.5 L435.0,430.2 L432.6,426.2 L431.1,422.5 L429.4,420.1 L426.4,418.1 L422.5,416.5 L420.2,414.5"/>
<path d="M430.6,554.0 L432.1,556.1 L433.1,559.7 L433.8,564.3 L433.0,567.6 L434.0,572.0 L433.6,574.8 L433.9,577.8 L433.3,582.7 L433.8,586.0 L433.2,589.6"/>
<path d="M378.1,506.1 L381.6,506.5 L384.3,508.0 L386.9,510.3 L388.6,512.5 L389.3,515.8 L391.2,518.4 L392.8,520.4 L395.3,522.9 L397.1,525.7"/>
<path d="M394.3,455.3 L396.1,450.7 L398.7,448.1 L401.0,443.8 L401.4,439.4 L400.7,435.3 L400.7,430.8 L399.5,426.8 L399.5,422.3 L399.1,417.3 L399.7,413.3"/>
<path d="M512.4,548.9 L516.9,548.3 L520.3,548.8 L523.4,549.7 L527.3,550.8 L532.1,550.3 L535.0,549.0"/>
<path d="M426.6,427.2 L424.3,425.5 L422.0,422.1 L419.8,420.9 L417.3,417.6 L415.2,415.8 L412.4,414.6 L409.7,412.6 L405.1,411.1"/>
<path d="M502.0,579.8 L498.0,581.2 L495.2,583.2 L493.0,584.4 L490.3,587.8 L486.2,589.7 L483.7,592.4 L481.3,594.0 L479.0,596.7 L477.9,599.2 L476.2,602.1"/>
<path d="M532.4,521.9 L535.3,519.9 L539.2,517.5 L542.6,514.4"/>
<path d="M480.8,538.2 L481.2,534.4 L481.4,530.4 L481.2,527.7 L479.2,523.6"/>
<path d="M450.8,564.7 L453.7,567.5 L456.4,570.5 L458.5,573.9 L459.6,576.8 L460.4,580.3 L460.4,583.1 L461.1,585.6 L461.3,590.3 L460.9,593.7 L459.2,597.9 L457.8,600.7 L456.8,604.1"/>
<path d="M408.7,497.0 L406.3,494.0 L404.6,489.9 L402.7,486.1 L401.3,483.9"/>
<path d="M505.9,530.0 L509.4,529.7 L513.2,528.0 L515.4,526.2 L516.5,524.0 L518.1,521.7 L520.5,520.3"/>
<path d="M556.9,436.1 L561.3,436.3 L564.3,437.8 L567.7,440.5 L571.8,442.0 L575.6,442.6 L579.7,443.3 L583.9,445.6"/>
<path d="M337.2,416.5 L340.3,417.4 L344.9,419.1 L348.0,421.6 L352.3,424.0 L355.1,426.4"/>
<path d="M367.8,605.2 L370.1,607.9 L373.4,610.9"/>
<path d="M412.3,532.4 L415.6,532.2 L420.3,531.7 L424.4,530.7 L429.1,530.1 L432.3,530.5 L435.3,529.6"/>
<path d="M436.7,528.5 L437.3,525.7 L440.0,521.5 L441.3,516.8 L443.2,513.4"/>
<path d="M532.0,511.0 L527.7,509.8 L523.3,509.8 L520.5,508.7 L516.7,506.7 L514.0,505.4 L509.8,504.4 L506.5,502.7 L502.1,502.2 L499.2,501.1 L494.9,499.1 L492.2,496.4 L489.3,493.6"/>
<path d="M373.9,448.8 L376.0,452.2 L378.2,455.2 L380.4,456.7 L382.1,459.7 L385.2,462.3 L386.9,464.7 L388.5,467.6 L389.8,469.8"/>
<path d="M332.0,610.1 L334.2,608.0 L337.2,606.8 L339.9,604.3 L343.0,601.9 L345.6,598.0 L347.7,593.5 L348.5,591.1 L348.2,587.6 L348.5,583.9 L350.4,579.6 L353.1,576.5"/>
<path d="M582.6,564.5 L584.1,567.2 L586.6,569.1 L590.7,571.5"/>
<path d="M513.9,540.6 L516.8,539.2 L518.7,536.9 L521.8,534.4 L524.9,531.6"/>
<path d="M449.6,485.1 L447.4,487.0 L445.7,489.3 L443.9,491.1 L441.4,492.7 L438.9,496.8 L437.4,501.4 L434.5,505.2 L433.4,508.6 L433.6,513.4"/>
<path d="M540.8,547.7 L538.5,550.5 L537.3,553.9 L536.9,556.4 L536.3,559.6 L534.9,562.4"/>
<path d="M352.4,502.1 L349.9,501.3 L346.6,498.7 L343.2,497.2 L340.2,496.5 L336.8,496.7 L332.2,494.7"/>
<path d="M571.8,429.7 L572.5,434.0 L574.1,438.6 L577.3,441.9 L579.5,443.6 L584.0,444.6 L586.9,445.2"/>
<path d="M440.1,594.2 L441.6,596.8 L442.8,600.9 L444.2,603.2 L447.4,605.6 L449.9,607.5 L453.7,609.0"/>
<path d="M513.4,573.9 L509.2,573.6 L504.6,573.2 L501.2,571.4 L498.2,570.4 L493.8,568.2 L490.3,567.9 L487.6,567.0"/>
<path d="M502.0,460.2 L497.8,460.3 L493.1,460.0 L488.3,460.4 L485.8,459.5 L482.7,458.9 L478.6,456.6 L475.2,453.4 L472.0,449.9 L469.7,448.2"/>
<path d="M519.6,500.2 L522.7,499.7 L526.2,497.6 L528.4,495.2 L531.8,491.7 L533.5,487.2 L535.2,484.5 L538.3,481.9 L540.6,479.8 L543.0,477.4 L544.2,474.7 L545.0,471.1 L546.2,466.9"/>
<path d="M352.6,434.6 L356.3,431.8 L358.6,428.5 L360.7,426.6 L365.1,424.5 L368.1,422.6 L371.8,421.7 L376.4,420.1 L379.8,419.9 L382.9,418.8 L387.5,417.0 L392.3,416.5 L396.8,417.3"/>
<path d="M337.4,514.5 L340.5,512.8 L343.7,511.6 L346.2,510.7 L349.7,509.2 L351.6,507.1 L355.7,505.3 L359.8,505.3 L364.3,506.5 L366.4,507.9"/>
<path d="M495.6,463.7 L494.1,459.4 L492.2,457.4 L490.0,456.2 L487.4,455.6 L484.1,456.0 L481.7,457.0 L476.9,457.0 L474.3,456.0"/>
<path d="M481.8,598.2 L479.3,600.4 L477.1,602.6 L475.6,605.0 L473.1,608.8 L470.6,611.8"/>
<path d="M417.9,584.1 L418.6,587.2 L418.2,590.2 L419.0,592.7 L419.9,596.6 L421.5,600.4 L423.1,604.7 L425.2,608.6"/>
<path d="M548.7,429.2 L550.5,425.5 L552.8,422.0 L554.1,419.6 L555.7,416.0 L556.0,412.5 L557.4,410.0"/>
<path d="M483.2,540.9 L486.4,540.7 L490.9,540.6 L494.3,540.3 L498.7,538.8 L503.0,536.5 L505.9,535.3 L510.1,532.8 L514.9,531.9 L517.5,530.0 L520.6,529.2 L523.8,528.4"/>
<path d="M489.8,498.3 L491.0,495.1 L492.5,492.1 L495.7,489.4 L497.8,487.7 L500.3,485.2 L503.2,482.5 L507.7,480.6 L511.0,479.2 L515.8,477.7 L519.2,476.1"/>
<path d="M542.5,444.5 L540.0,447.3 L538.3,451.7 L535.9,455.6 L532.0,458.3 L529.7,460.0"/>
<path d="M401.0,513.3 L398.3,513.5 L395.6,513.4 L391.5,513.1 L387.4,512.0 L385.0,512.4 L381.1,512.3 L377.9,511.0"/>
<path d="M349.5,413.1 L353.3,413.8 L357.4,413.7 L362.4,413.7 L365.9,414.0 L368.7,413.2 L371.5,413.1"/>
<path d="M349.9,444.4 L345.5,443.4 L343.0,443.7 L339.7,443.4 L336.5,442.5 L333.3,442.5 L328.9,444.2 L325.7,445.2"/>
</g>
<g fill="none" stroke="#fcfcfc" stroke-width="0.7" stroke-opacity="0.85">
<path d="M516.8,536.8 L514.5,538.9 L512.1,541.0"/>
<path d="M478.1,534.5 L480.5,532.4 L482.9,530.3"/>
<path d="M493.2,540.7 L491.3,542.5 L489.4,544.3"/>
<path d="M483.3,547.0 L484.7,548.5 L486.1,550.0"/>
<path d="M522.7,514.0 L520.9,511.3 L519.1,508.6"/>
<path d="M503.1,521.1 L501.7,523.3 L500.3,525.6"/>
<path d="M475.2,500.8 L475.0,499.3 L474.8,497.8"/>
<path d="M499.4,523.4 L500.1,521.9 L500.8,520.5"/>
<path d="M478.9,529.7 L479.5,531.6 L480.1,533.5"/>
<path d="M459.9,502.4 L457.1,504.2 L454.3,506.1"/>
<path d="M497.2,536.3 L498.7,539.6 L500.3,542.9"/>
<path d="M499.7,531.3 L502.2,528.9 L504.8,526.5"/>
<path d="M519.9,527.0 L519.3,523.7 L518.7,520.4"/>
<path d="M495.3,535.0 L494.6,531.7 L494.0,528.4"/>
<path d="M456.2,518.4 L458.0,521.3 L459.9,524.2"/>
<path d="M458.4,522.1 L456.4,522.5 L454.5,523.0"/>
<path d="M500.8,527.1 L501.4,530.6 L502.0,534.2"/>
<path d="M460.7,535.0 L457.5,536.7 L454.2,538.3"/>
<path d="M520.8,550.3 L522.2,552.5 L523.6,554.7"/>
<path d="M518.6,504.0 L519.5,500.9 L520.5,497.7"/>
<path d="M480.2,551.6 L480.1,554.5 L479.9,557.3"/>
<path d="M507.1,520.9 L506.1,519.1 L505.0,517.3"/>
<path d="M472.8,556.2 L474.0,558.1 L475.2,559.9"/>
<path d="M481.8,499.9 L482.4,501.6 L483.0,503.4"/>
<path d="M486.3,534.5 L485.0,535.5 L483.7,536.4"/>
<path d="M481.4,510.5 L482.1,513.6 L482.9,516.6"/>
<path d="M518.1,535.1 L516.6,535.2 L515.0,535.3"/>
<path d="M521.4,505.6 L523.1,504.6 L524.9,503.5"/>
<path d="M487.1,539.0 L484.2,537.3 L481.2,535.5"/>
<path d="M478.9,527.2 L479.3,523.8 L479.7,520.4"/>
<path d="M456.9,509.1 L456.0,511.9 L455.1,514.7"/>
<path d="M501.8,525.1 L502.5,526.8 L503.1,528.6"/>
<path d="M501.9,538.7 L500.3,540.9 L498.7,543.0"/>
<path d="M479.7,537.5 L482.5,539.8 L485.2,542.0"/>
<path d="M486.8,494.4 L483.5,495.3 L480.3,496.3"/>
<path d="M498.1,531.6 L496.8,532.6 L495.6,533.6"/>
<path d="M489.0,523.2 L486.2,524.9 L483.4,526.6"/>
<path d="M505.4,508.4 L508.3,509.9 L511.3,511.4"/>
<path d="M470.5,547.4 L469.6,545.9 L468.7,544.5"/>
<path d="M492.3,524.3 L493.5,522.4 L494.7,520.4"/>
<path d="M506.5,533.7 L506.6,535.6 L506.8,537.5"/>
<path d="M476.0,521.3 L475.0,523.2 L474.1,525.1"/>
<path d="M521.6,531.3 L521.4,535.2 L521.3,539.1"/>
<path d="M475.9,519.9 L479.6,519.6 L483.4,519.4"/>
<path d="M458.7,518.8 L458.8,520.5 L458.9,522.2"/>
<path d="M501.6,527.5 L502.5,524.3 L503.3,521.2"/>
<path d="M492.4,512.9 L494.1,513.9 L495.7,514.9"/>
<path d="M532.0,524.6 L529.3,526.0 L526.5,527.4"/>
<path d="M484.5,521.7 L486.8,523.9 L489.1,526.1"/>
<path d="M493.6,537.4 L494.0,534.6 L494.5,531.9"/>
<path d="M509.6,496.8 L511.7,497.8 L513.8,498.9"/>
<path d="M494.9,531.9 L495.2,530.0 L495.4,528.1"/>
<path d="M509.5,532.9 L509.7,529.9 L509.8,526.9"/>
<path d="M487.5,535.0 L490.6,533.5 L493.8,532.1"/>
<path d="M494.0,521.8 L495.6,524.1 L497.3,526.3"/>
<path d="M496.7,515.2 L497.0,513.2 L497.2,511.2"/>
<path d="M476.7,493.6 L476.3,492.0 L475.8,490.4"/>
<path d="M493.5,524.6 L496.3,525.3 L499.0,525.9"/>
<path d="M511.4,532.0 L510.1,531.0 L508.7,530.0"/>
<path d="M530.8,535.1 L529.2,537.0 L527.5,538.9"/>
<path d="M525.1,520.2 L522.0,518.5 L519.0,516.7"/>
<path d="M496.7,503.3 L494.6,503.3 L492.4,503.4"/>
<path d="M481.9,551.3 L484.4,552.2 L486.9,553.1"/>
<path d="M477.2,497.4 L478.4,499.5 L479.7,501.6"/>
<path d="M522.7,514.9 L519.4,514.7 L516.0,514.4"/>
<path d="M475.9,504.3 L474.7,503.1 L473.6,501.8"/>
<path d="M505.0,496.3 L505.0,492.7 L505.0,489.0"/>
<path d="M479.2,518.1 L475.8,516.7 L472.3,515.3"/>
<path d="M520.3,515.0 L521.5,514.0 L522.8,513.0"/>
<path d="M466.9,541.6 L464.5,539.1 L462.1,536.7"/>
<path d="M477.9,536.7 L479.9,536.1 L481.9,535.4"/>
<path d="M501.6,498.7 L499.7,495.5 L497.8,492.2"/>
<path d="M484.8,543.7 L483.9,546.5 L482.9,549.4"/>
<path d="M523.6,500.9 L521.1,501.3 L518.6,501.7"/>
<path d="M504.5,537.3 L502.9,536.8 L501.2,536.3"/>
<path d="M470.6,529.0 L472.9,529.5 L475.2,529.9"/>
<path d="M509.8,558.1 L511.7,556.5 L513.7,554.8"/>
<path d="M494.5,548.3 L495.1,551.3 L495.8,554.3"/>
<path d="M510.6,514.0 L508.9,515.5 L507.1,517.0"/>
<path d="M498.8,533.3 L496.7,536.2 L494.6,539.0"/>
<path d="M532.1,516.9 L531.2,519.0 L530.4,521.2"/>
<path d="M503.2,493.3 L500.3,491.0 L497.4,488.7"/>
<path d="M459.7,547.3 L463.3,547.5 L466.9,547.7"/>
<path d="M493.2,532.4 L490.4,531.1 L487.5,529.9"/>
<path d="M477.1,499.0 L480.4,498.7 L483.8,498.4"/>
<path d="M474.9,499.5 L477.1,502.0 L479.3,504.6"/>
<path d="M478.5,531.9 L476.1,531.7 L473.8,531.5"/>
<path d="M488.0,538.7 L486.9,541.7 L485.8,544.8"/>
<path d="M524.3,514.5 L524.9,512.9 L525.4,511.4"/>
<path d="M460.3,526.1 L459.8,524.7 L459.2,523.2"/>
<path d="M523.6,503.8 L525.4,505.5 L527.2,507.1"/>
<path d="M473.6,523.8 L475.4,526.2 L477.1,528.7"/>
<path d="M517.2,518.3 L515.7,518.5 L514.2,518.7"/>
<path d="M487.4,559.1 L488.8,562.6 L490.2,566.1"/>
<path d="M520.4,524.7 L521.8,527.3 L523.1,530.0"/>
<path d="M462.7,499.5 L462.9,502.9 L463.1,506.4"/>
<path d="M489.8,524.2 L488.3,525.1 L486.9,526.0"/>
<path d="M465.8,498.3 L461.9,498.5 L458.0,498.7"/>
<path d="M510.6,514.9 L509.0,518.1 L507.4,521.3"/>
<path d="M518.7,531.6 L515.0,530.8 L511.4,530.1"/>
<path d="M498.0,514.1 L500.2,514.9 L502.3,515.8"/>
<path d="M481.4,504.3 L483.8,502.7 L486.3,501.0"/>
<path d="M500.3,490.2 L498.2,492.7 L496.2,495.2"/>
<path d="M506.7,515.9 L503.7,516.3 L500.7,516.8"/>
<path d="M458.7,544.5 L457.7,542.4 L456.7,540.2"/>
<path d="M498.3,509.4 L496.6,509.7 L494.8,510.0"/>
<path d="M463.1,501.2 L460.6,501.2 L458.1,501.2"/>
<path d="M502.5,518.8 L504.6,519.4 L506.7,520.0"/>
<path d="M478.0,505.3 L479.4,503.2 L480.9,501.1"/>
<path d="M487.3,528.7 L486.8,526.3 L486.3,523.9"/>
<path d="M515.6,500.0 L517.5,501.8 L519.4,503.6"/>
<path d="M491.1,524.7 L490.4,522.5 L489.6,520.4"/>
<path d="M473.4,544.5 L477.1,544.0 L480.7,543.6"/>
<path d="M526.0,543.7 L523.1,541.5 L520.3,539.4"/>
<path d="M483.8,494.2 L485.5,493.4 L487.2,492.6"/>
<path d="M490.8,514.5 L490.7,512.7 L490.6,510.9"/>
<path d="M505.7,509.0 L506.6,505.5 L507.5,502.0"/>
<path d="M469.8,525.0 L467.9,528.2 L466.0,531.3"/>
<path d="M514.5,547.3 L514.3,544.7 L514.1,542.2"/>
<path d="M482.9,558.1 L483.7,561.3 L484.4,564.4"/>
<path d="M531.0,538.9 L534.0,538.9 L536.9,539.0"/>
<path d="M478.4,530.4 L479.2,533.6 L479.9,536.9"/>
<path d="M477.1,497.5 L478.2,496.1 L479.3,494.6"/>
<path d="M502.0,514.8 L502.1,516.6 L502.3,518.4"/>
<path d="M510.8,528.1 L514.5,527.4 L518.3,526.7"/>
<path d="M487.8,542.8 L485.6,539.9 L483.3,536.9"/>
<path d="M510.9,513.8 L510.1,510.5 L509.3,507.2"/>
<path d="M462.1,523.6 L459.2,521.2 L456.2,518.8"/>
<path d="M480.7,537.2 L477.3,535.7 L473.9,534.1"/>
<path d="M500.3,525.9 L498.5,525.7 L496.8,525.5"/>
<path d="M501.4,559.1 L498.1,560.0 L494.8,560.9"/>
<path d="M468.0,524.6 L470.9,524.1 L473.9,523.7"/>
<path d="M523.0,530.0 L520.4,529.4 L517.8,528.8"/>
<path d="M485.8,545.8 L489.4,544.3 L493.0,542.8"/>
<path d="M496.5,547.9 L493.2,546.7 L489.8,545.5"/>
<path d="M510.9,522.6 L508.0,521.0 L505.1,519.5"/>
<path d="M500.2,536.1 L501.0,534.1 L501.8,532.1"/>
<path d="M514.2,519.9 L514.0,521.6 L513.7,523.3"/>
<path d="M485.6,530.0 L488.1,529.2 L490.5,528.5"/>
<path d="M517.4,506.7 L519.7,507.5 L522.0,508.3"/>
<path d="M477.5,505.6 L477.5,508.7 L477.5,511.9"/>
<path d="M465.8,535.2 L469.5,534.5 L473.1,533.8"/>
<path d="M504.4,548.9 L503.1,547.8 L501.8,546.6"/>
<path d="M493.7,514.8 L497.1,516.5 L500.4,518.3"/>
<path d="M493.4,523.0 L494.3,519.7 L495.1,516.5"/>
<path d="M504.1,553.7 L504.2,550.1 L504.3,546.5"/>
<path d="M497.2,510.0 L500.5,510.5 L503.9,511.0"/>
<path d="M524.1,527.5 L522.5,529.6 L521.0,531.6"/>
<path d="M468.6,500.3 L468.5,497.5 L468.5,494.7"/>
<path d="M472.7,507.8 L470.6,506.9 L468.5,506.0"/>
<path d="M509.8,535.7 L509.6,532.5 L509.4,529.3"/>
<path d="M516.6,528.6 L515.8,525.3 L515.0,521.9"/>
<path d="M506.1,511.8 L503.6,514.6 L501.2,517.4"/>
<path d="M516.0,535.8 L514.8,537.7 L513.6,539.7"/>
<path d="M533.3,520.0 L535.0,517.8 L536.6,515.5"/>
<path d="M480.2,533.8 L478.3,536.3 L476.4,538.8"/>
<path d="M507.7,557.2 L507.1,560.7 L506.5,564.2"/>
<path d="M497.2,502.5 L497.0,500.6 L496.7,498.8"/>
<path d="M455.4,537.9 L456.6,539.3 L457.7,540.6"/>
<path d="M458.4,519.4 L461.9,520.0 L465.4,520.6"/>
<path d="M530.0,543.2 L530.4,541.2 L530.8,539.2"/>
<path d="M518.5,512.4 L520.0,510.6 L521.5,508.8"/>
<path d="M464.5,530.7 L465.0,527.0 L465.4,523.2"/>
<path d="M493.4,526.1 L491.1,529.0 L488.9,532.0"/>
<path d="M499.2,520.1 L501.7,519.2 L504.1,518.3"/>
<path d="M519.1,513.3 L517.6,509.9 L516.1,506.4"/>
<path d="M460.1,512.3 L459.4,508.7 L458.7,505.1"/>
<path d="M485.7,516.5 L488.2,513.5 L490.8,510.5"/>
<path d="M458.8,530.4 L461.0,528.4 L463.2,526.3"/>
<path d="M483.1,525.1 L480.7,527.3 L478.3,529.5"/>
<path d="M521.9,505.3 L524.8,505.3 L527.7,505.4"/>
<path d="M498.8,553.9 L498.6,550.8 L498.3,547.7"/>
<path d="M506.7,517.7 L507.1,519.1 L507.6,520.6"/>
<path d="M471.9,537.2 L475.6,535.8 L479.2,534.4"/>
<path d="M528.4,533.3 L525.6,532.2 L522.9,531.2"/>
<path d="M515.9,530.0 L513.3,530.5 L510.6,531.1"/>
<path d="M495.5,490.2 L496.8,489.0 L498.1,487.8"/>
<path d="M481.9,523.3 L480.2,521.8 L478.5,520.2"/>
<path d="M519.5,519.0 L516.7,521.5 L514.0,524.0"/>
<path d="M499.9,526.1 L498.8,524.7 L497.8,523.3"/>
<path d="M470.7,509.4 L471.4,506.6 L472.2,503.9"/>
<path d="M474.8,501.0 L472.8,499.3 L470.8,497.5"/>
<path d="M462.1,515.0 L462.6,516.9 L463.1,518.8"/>
<path d="M507.3,505.9 L508.1,509.1 L508.9,512.2"/>
<path d="M476.2,499.4 L479.3,499.1 L482.3,498.8"/>
<path d="M485.1,524.2 L484.4,522.7 L483.6,521.1"/>
<path d="M504.9,516.0 L506.6,515.9 L508.3,515.7"/>
<path d="M486.5,538.6 L485.8,541.2 L485.0,543.8"/>
<path d="M477.8,546.1 L478.4,547.7 L479.0,549.2"/>
<path d="M491.0,521.3 L491.2,519.3 L491.4,517.3"/>
<path d="M515.5,523.1 L518.1,521.8 L520.7,520.4"/>
<path d="M493.8,512.9 L493.8,511.2 L493.8,509.5"/>
<path d="M495.8,525.9 L495.4,522.7 L495.0,519.6"/>
<path d="M502.2,520.3 L502.7,518.8 L503.2,517.2"/>
<path d="M484.5,549.8 L484.5,551.6 L484.4,553.4"/>
<path d="M514.2,499.9 L516.6,500.4 L519.0,500.8"/>
<path d="M499.4,533.6 L502.4,532.6 L505.3,531.5"/>
<path d="M474.3,510.1 L474.4,506.7 L474.5,503.4"/>
<path d="M499.6,509.5 L502.5,509.7 L505.3,510.0"/>
<path d="M473.1,520.4 L470.9,523.2 L468.7,525.9"/>
<path d="M493.1,524.6 L493.2,526.9 L493.4,529.3"/>
<path d="M496.9,530.2 L500.5,531.0 L504.0,531.8"/>
<path d="M480.4,541.9 L482.1,542.6 L483.8,543.3"/>
<path d="M499.1,545.2 L502.1,546.3 L505.1,547.3"/>
<path d="M507.3,518.3 L509.8,517.2 L512.3,516.0"/>
<path d="M468.0,502.8 L466.8,501.2 L465.6,499.6"/>
<path d="M520.2,505.5 L519.6,503.0 L519.1,500.5"/>
<path d="M502.3,522.4 L500.0,520.4 L497.7,518.5"/>
<path d="M504.9,521.7 L504.3,524.1 L503.8,526.6"/>
<path d="M513.1,520.8 L516.2,522.8 L519.3,524.8"/>
<path d="M469.3,507.2 L467.4,504.4 L465.5,501.6"/>
<path d="M503.2,528.9 L505.4,529.9 L507.7,530.9"/>
<path d="M492.1,519.0 L490.4,518.6 L488.8,518.3"/>
<path d="M486.3,522.9 L485.8,519.9 L485.2,516.8"/>
<path d="M512.8,509.4 L515.1,508.1 L517.4,506.9"/>
<path d="M491.7,558.4 L489.2,560.4 L486.6,562.4"/>
<path d="M505.9,524.3 L508.5,521.8 L511.1,519.2"/>
<path d="M481.7,543.8 L482.4,546.2 L483.1,548.5"/>
<path d="M522.1,543.9 L522.7,546.2 L523.3,548.4"/>
<path d="M478.5,513.2 L479.5,511.8 L480.4,510.4"/>
<path d="M494.6,518.5 L493.4,516.6 L492.2,514.6"/>
<path d="M509.6,529.0 L506.0,529.4 L502.4,529.8"/>
<path d="M492.9,529.9 L495.4,531.4 L497.9,533.0"/>
<path d="M491.2,529.9 L490.8,533.7 L490.3,537.5"/>
<path d="M467.2,552.1 L465.3,551.6 L463.4,551.1"/>
<path d="M491.2,507.1 L489.9,508.5 L488.6,509.9"/>
<path d="M516.0,505.6 L517.6,504.6 L519.2,503.5"/>
<path d="M526.1,512.7 L529.2,513.3 L532.2,513.9"/>
<path d="M496.2,492.0 L497.5,490.3 L498.7,488.7"/>
<path d="M489.7,558.1 L491.5,558.2 L493.2,558.3"/>
<path d="M477.8,538.3 L477.3,540.9 L476.8,543.6"/>
<path d="M513.5,538.9 L510.9,537.9 L508.4,537.0"/>
<path d="M469.7,526.8 L473.1,525.0 L476.4,523.3"/>
<path d="M515.5,532.4 L516.3,534.4 L517.0,536.4"/>
<path d="M494.7,545.3 L493.8,546.7 L493.0,548.1"/>
<path d="M465.7,527.3 L466.3,530.2 L467.0,533.2"/>
<path d="M532.6,509.3 L531.4,510.5 L530.3,511.7"/>
<path d="M515.9,531.9 L513.2,531.5 L510.4,531.1"/>
<path d="M508.8,534.6 L506.1,535.0 L503.5,535.3"/>
<path d="M502.2,491.2 L504.6,493.8 L507.0,496.4"/>
<path d="M519.0,540.1 L518.4,543.5 L517.7,546.9"/>
<path d="M491.1,519.7 L488.9,520.1 L486.8,520.4"/>
<path d="M473.9,508.9 L475.3,505.4 L476.7,501.9"/>
<path d="M480.5,500.6 L483.6,501.2 L486.6,501.9"/>
<path d="M474.2,499.2 L475.7,501.0 L477.3,502.9"/>
<path d="M510.2,512.9 L509.5,514.4 L508.8,515.8"/>
<path d="M471.1,498.1 L469.2,495.5 L467.3,492.8"/>
<path d="M490.7,525.5 L490.3,522.9 L489.8,520.3"/>
<path d="M484.4,556.3 L487.9,555.8 L491.5,555.2"/>
<path d="M485.5,539.4 L486.0,541.0 L486.5,542.6"/>
<path d="M494.7,527.3 L493.0,529.4 L491.2,531.5"/>
<path d="M488.4,528.8 L490.4,526.1 L492.5,523.5"/>
<path d="M500.8,551.5 L502.5,550.4 L504.1,549.3"/>
<path d="M483.5,544.7 L483.9,542.6 L484.4,540.5"/>
<path d="M494.6,489.7 L496.5,490.0 L498.4,490.4"/>
<path d="M487.0,506.3 L483.8,504.8 L480.7,503.4"/>
<path d="M501.4,513.7 L503.4,516.6 L505.4,519.6"/>
<path d="M462.4,529.0 L460.0,528.2 L457.7,527.5"/>
<path d="M477.1,519.7 L476.7,522.2 L476.3,524.7"/>
<path d="M534.2,524.7 L535.7,526.4 L537.2,528.1"/>
<path d="M541.7,504.8 L540.2,505.6 L538.7,506.4"/>
<path d="M537.2,476.8 L537.1,479.8 L537.1,482.7"/>
<path d="M536.9,497.1 L536.8,493.2 L536.6,489.3"/>
<path d="M536.6,496.1 L538.8,497.1 L540.9,498.2"/>
<path d="M526.6,485.4 L525.8,482.5 L525.0,479.7"/>
<path d="M518.4,492.0 L515.2,491.4 L512.1,490.8"/>
<path d="M520.2,490.8 L517.7,489.8 L515.3,488.9"/>
<path d="M531.7,504.5 L529.0,506.9 L526.3,509.4"/>
<path d="M517.6,478.3 L514.3,480.4 L510.9,482.4"/>
<path d="M536.1,485.7 L535.6,484.2 L535.1,482.6"/>
<path d="M536.3,505.4 L534.5,508.7 L532.7,512.1"/>
<path d="M524.7,500.6 L525.0,496.7 L525.2,492.9"/>
<path d="M510.4,495.6 L508.6,499.1 L506.9,502.6"/>
<path d="M540.4,499.1 L540.4,496.7 L540.4,494.2"/>
<path d="M518.3,501.7 L515.8,501.8 L513.4,501.8"/>
<path d="M516.7,478.2 L518.0,476.9 L519.3,475.7"/>
<path d="M543.2,484.5 L540.9,482.5 L538.6,480.4"/>
<path d="M518.4,495.0 L517.0,497.5 L515.6,500.0"/>
<path d="M532.6,483.5 L531.2,486.7 L529.8,489.9"/>
<path d="M523.7,479.5 L524.2,477.1 L524.7,474.7"/>
<path d="M528.3,489.1 L527.6,491.9 L526.8,494.6"/>
<path d="M532.1,497.9 L529.2,496.0 L526.3,494.2"/>
<path d="M539.0,484.8 L537.9,483.2 L536.8,481.7"/>
<path d="M528.6,492.7 L526.9,489.8 L525.2,486.8"/>
<path d="M534.2,490.8 L532.1,489.3 L530.0,487.9"/>
<path d="M532.0,495.2 L532.9,496.9 L533.8,498.7"/>
<path d="M536.9,475.7 L537.0,477.2 L537.2,478.8"/>
<path d="M535.6,493.7 L536.4,496.2 L537.3,498.7"/>
<path d="M529.8,494.4 L528.9,497.6 L528.0,500.9"/>
<path d="M521.1,506.2 L523.0,505.3 L525.0,504.3"/>
<path d="M535.9,488.8 L534.6,491.2 L533.3,493.6"/>
<path d="M527.2,489.2 L530.7,489.0 L534.2,488.7"/>
<path d="M542.4,479.5 L540.4,480.6 L538.5,481.6"/>
<path d="M531.5,492.9 L533.9,494.1 L536.3,495.3"/>
<path d="M534.1,494.2 L534.8,491.7 L535.5,489.1"/>
<path d="M537.6,482.3 L535.0,479.8 L532.5,477.3"/>
<path d="M519.0,496.2 L522.8,496.5 L526.6,496.8"/>
<path d="M536.4,486.8 L533.1,487.7 L529.9,488.6"/>
<path d="M517.3,490.5 L516.5,491.9 L515.7,493.3"/>
<path d="M538.4,492.8 L536.4,492.6"/>
<path d="M513.8,496.0 L514.4,497.9 L515.1,499.7"/>
<path d="M528.7,492.6 L526.9,495.4 L525.2,498.1"/>
<path d="M526.5,478.9 L527.4,476.5 L528.2,474.2"/>
<path d="M526.7,502.7 L527.1,500.5 L527.4,498.2"/>
<path d="M527.4,498.8 L527.5,500.7 L527.7,502.7"/>
<path d="M532.5,505.0 L534.8,505.4 L537.0,505.9"/>
<path d="M528.0,477.1 L530.2,474.8 L532.4,472.4"/>
<path d="M526.7,501.9 L529.5,503.4 L532.3,504.8"/>
<path d="M516.1,497.0 L519.3,498.4 L522.5,499.8"/>
<path d="M517.7,495.5 L520.0,492.4 L522.3,489.4"/>
<path d="M528.4,482.6 L525.0,481.9 L521.6,481.1"/>
<path d="M524.4,505.2 L527.7,506.3 L530.9,507.4"/>
<path d="M535.9,490.5 L538.3,493.2 L540.8,495.9"/>
<path d="M510.4,485.9 L513.4,487.1 L516.4,488.4"/>
<path d="M530.7,490.6 L532.6,488.0 L534.5,485.5"/>
<path d="M520.8,490.9 L522.8,493.5 L524.8,496.1"/>
<path d="M530.3,477.8 L534.0,478.6 L537.7,479.3"/>
<path d="M514.2,489.4 L513.5,487.3 L512.8,485.1"/>
<path d="M515.4,482.5 L513.7,483.7 L511.9,484.8"/>
<path d="M536.3,483.3 L535.7,481.0 L535.1,478.7"/>
<path d="M510.6,496.3 L509.0,495.8 L507.3,495.2"/>
<path d="M535.4,497.8 L536.6,494.7 L537.9,491.5"/>
<path d="M535.7,500.9 L536.5,497.7 L537.3,494.4"/>
<path d="M509.5,493.0 L511.3,490.9 L513.2,488.8"/>
<path d="M543.2,480.3 L541.9,477.4 L540.6,474.5"/>
<path d="M535.2,492.0 L535.5,494.3 L535.7,496.7"/>
<path d="M531.4,507.2 L533.0,507.6 L534.5,508.0"/>
<path d="M535.3,509.8 L533.8,513.2 L532.3,516.5"/>
<path d="M524.6,508.5 L522.8,506.8 L521.0,505.1"/>
<path d="M534.4,477.3 L531.0,475.8 L527.5,474.2"/>
<path d="M519.1,479.7 L522.7,480.9 L526.2,482.1"/>
<path d="M536.1,496.2 L535.1,498.8 L534.2,501.4"/>
<path d="M521.9,495.2 L521.2,497.1 L520.4,499.1"/>
<path d="M523.0,479.5 L526.5,480.8 L530.0,482.0"/>
<path d="M529.0,496.8 L529.6,493.2 L530.1,489.6"/>
<path d="M548.2,479.5 L544.6,478.5 L540.9,477.5"/>
<path d="M543.2,479.2 L547.1,478.7 L550.9,478.2"/>
<path d="M518.3,494.5 L518.2,490.9 L518.2,487.3"/>
<path d="M519.6,503.1 L521.3,503.8 L523.0,504.5"/>
<path d="M449.5,540.1 L452.9,541.3 L456.4,542.5"/>
<path d="M454.7,548.1 L452.3,548.5 L449.9,548.9"/>
<path d="M464.6,534.3 L462.6,533.2 L460.6,532.2"/>
<path d="M461.0,535.2 L460.9,532.8 L460.7,530.4"/>
<path d="M448.9,533.4 L452.6,533.3 L456.4,533.3"/>
<path d="M456.3,540.6 L460.1,540.9 L464.0,541.2"/>
<path d="M459.1,544.1 L455.4,543.1 L451.7,542.1"/>
<path d="M463.8,533.2 L462.2,530.8 L460.6,528.4"/>
<path d="M451.7,537.1 L453.5,537.3 L455.3,537.6"/>
<path d="M462.8,551.0 L462.1,553.7 L461.4,556.4"/>
<path d="M465.8,545.8 L466.7,542.9 L467.5,540.0"/>
<path d="M456.9,541.2 L460.0,540.0 L463.2,538.8"/>
<path d="M455.9,537.5 L458.1,538.7 L460.4,539.9"/>
<path d="M463.5,539.7 L459.6,539.3 L455.7,538.9"/>
<path d="M458.1,532.7 L461.8,533.0 L465.4,533.2"/>
<path d="M451.9,545.9 L453.8,542.6 L455.6,539.3"/>
<path d="M461.4,540.4 L459.2,537.4 L457.0,534.4"/>
<path d="M455.6,538.9 L457.2,539.4 L458.7,540.0"/>
<path d="M464.1,535.7 L466.0,533.0 L468.0,530.4"/>
<path d="M460.1,549.2 L458.2,549.7 L456.4,550.1"/>
</g>
<g fill="none" stroke="#fafafa" stroke-width="0.95" stroke-opacity="0.9" stroke-linejoin="round">
<path d="M323.0,444.6 L344.6,445.7 L370.6,437.0 L387.9,433.8 L400.9,437.0 L416.0,444.6 L437.7,441.4 L458.0,438.1"/>
<path d="M422.5,446.8 L409.5,474.9 L400.9,492.2 L394.4,511.0 L377.1,529.5 L361.9,553.3 L349.0,574.9 L336.0,596.5 L327.3,612.0"/>
<path d="M387.9,433.8 L381.4,448.9 L374.9,468.4 L377.1,487.9 L387.9,503.0"/>
<path d="M344.6,445.7 L351.1,453.3 L359.8,470.6 L366.3,487.9 L379.3,496.5 L394.4,498.7 L413.9,496.5 L435.5,481.4 L458.0,474.9"/>
<path d="M323.0,466.3 L336.0,472.7 L353.3,470.6"/>
<path d="M323.0,507.4 L344.6,496.5 L366.3,487.9"/>
<path d="M424.7,410.0 L418.2,431.6 L416.0,444.6"/>
<path d="M437.7,441.4 L444.2,464.1 L452.8,481.4 L458.0,496.5"/>
<path d="M357.6,410.0 L362.0,423.0 L370.6,437.0"/>
<path d="M431.2,511.0 L426.9,496.5 L424.7,479.2 L418.2,459.8"/>
<path d="M457.0,448.9 L478.6,459.8 L500.3,470.6 L521.9,481.4 L532.7,483.6"/>
<path d="M530.6,410.0 L528.4,431.6 L530.6,453.3 L532.7,474.9 L534.9,485.7"/>
<path d="M537.0,485.7 L552.2,474.9 L569.5,459.8 L592.0,444.6"/>
<path d="M534.9,487.9 L511.1,500.9 L489.5,511.0 L498.0,527.3 L483.0,553.3 L474.3,570.6 L465.7,592.2 L457.0,605.2"/>
<path d="M457.0,466.3 L470.0,472.7 L478.6,492.2 L489.5,511.0"/>
<path d="M485.1,410.0 L489.5,431.6 L500.3,453.3 L506.8,474.9"/>
<path d="M457.0,423.0 L478.6,418.7 L511.1,414.3"/>
<path d="M550.0,410.0 L558.7,431.6 L571.7,446.8"/>
<path d="M470.0,410.0 L470.0,442.5 L465.7,472.7"/>
<path d="M394.4,523.0 L409.5,533.8 L431.2,546.8 L458.0,549.0 L480.0,545.0 L500.0,535.0"/>
<path d="M323.0,555.4 L355.5,556.5 L377.1,553.3 L392.2,555.4 L413.9,548.9 L431.2,546.8"/>
<path d="M458.0,536.0 L431.2,553.3 L413.9,579.2 L396.6,596.5 L379.3,612.0"/>
<path d="M392.2,555.4 L387.9,574.9 L379.3,596.5 L372.8,612.0"/>
<path d="M413.9,579.2 L431.2,581.4 L452.8,587.9 L458.0,587.9 L470.0,590.0"/>
<path d="M431.2,531.6 L437.7,553.3 L442.0,574.9 L448.5,596.5"/>
<path d="M323.0,510.0 L344.6,512.2 L387.9,516.5 L413.9,514.3 L458.0,516.5"/>
<path d="M336.0,531.6 L331.7,564.1 L336.0,612.0"/>
<path d="M374.9,542.5 L355.5,559.8"/>
<path d="M500.3,523.0 L526.2,527.3 L543.5,523.0 L565.2,518.7 L592.0,514.3"/>
<path d="M526.2,533.8 L521.9,553.3 L517.6,574.9 L513.3,596.5"/>
<path d="M500.3,542.5 L513.3,553.3 L532.7,574.9 L547.9,596.5"/>
<path d="M578.2,510.0 L582.5,531.6 L586.8,562.0"/>
<path d="M440.0,600.0 L470.0,604.0 L500.0,612.0"/>
</g>
<circle cx="457.5" cy="511.3" r="5.6" fill="#5fd0ec" fill-opacity="0.9"/>
<text x="323" y="444.3" font-family="Liberation Sans" font-size="7.9" fill="#5e5e5e" stroke="#5e5e5e" stroke-width="0.3">Cumberland</text>
<text x="416" y="445.8" font-family="Liberation Sans" font-size="7.9" fill="#5e5e5e" stroke="#5e5e5e" stroke-width="0.3">Hagerstown</text>
<text x="393.5" y="466.8" font-family="Liberation Sans" font-size="7.9" fill="#5e5e5e" stroke="#5e5e5e" stroke-width="0.3">Martinsburg</text>
<text x="448" y="471.8" font-family="Liberation Sans" font-size="7.9" fill="#5e5e5e" stroke="#5e5e5e" stroke-width="0.3">Frederick</text>
<text x="523.5" y="472.8" font-family="Liberation Sans" font-size="7.9" fill="#5e5e5e" stroke="#5e5e5e" stroke-width="0.3">Towson</text>
<text x="548" y="457.8" font-family="Liberation Sans" font-size="7.9" fill="#5e5e5e" stroke="#5e5e5e" stroke-width="0.3">Bel Air</text>
<text x="518.5" y="486.3" font-family="Liberation Sans" font-size="7.9" fill="#5e5e5e" stroke="#5e5e5e" stroke-width="0.3">Baltimore</text>
<text x="331" y="480.3" font-family="Liberation Sans" font-size="7.9" fill="#5e5e5e" stroke="#5e5e5e" stroke-width="0.3">Romney</text>
<text x="378" y="498.3" font-family="Liberation Sans" font-size="7.9" fill="#5e5e5e" stroke="#5e5e5e" stroke-width="0.3">Winchester</text>
<text x="435.5" y="506.3" font-family="Liberation Sans" font-size="7.9" fill="#5e5e5e" stroke="#5e5e5e" stroke-width="0.3">Leesburg</text>
<text x="477" y="520.3" font-family="Liberation Sans" font-size="7.9" fill="#5e5e5e" stroke="#5e5e5e" stroke-width="0.3">Silver Spring</text>
<text x="528.5" y="521.8" font-family="Liberation Sans" font-size="7.9" fill="#5e5e5e" stroke="#5e5e5e" stroke-width="0.3">Annapolis</text>
<text x="478" y="541.8" font-family="Liberation Sans" font-size="7.9" fill="#5e5e5e" stroke="#5e5e5e" stroke-width="0.3">Alexandria</text>
<text x="323" y="582.3" font-family="Liberation Sans" font-size="7.9" fill="#5e5e5e" stroke="#5e5e5e" stroke-width="0.3">rrisonburg</text>
<text x="434" y="598.8" font-family="Liberation Sans" font-size="7.9" fill="#5e5e5e" stroke="#5e5e5e" stroke-width="0.3">Fredericksburg</text>
<rect x="569.9" y="415.2" width="12.1" height="11.7" rx="2" fill="#2f2f2f" stroke="#555" stroke-width="0.3"/>
<rect x="569.9" y="430.8" width="12.1" height="11.7" rx="2" fill="#2f2f2f" stroke="#555" stroke-width="0.3"/>
<path d="M573.4 420.9 H578.4 M575.9 418.6 V423.2" stroke="#1d62d6" stroke-width="1"/>
<path d="M573.9 436.7 H578.4" stroke="#1d62d6" stroke-width="1"/>
</svg><!--/MAP-->
<div class="a" style="left:8px;top:597px;width:30px;text-align:center;font-size:6.8px;line-height:8px;color:#a8a8a8">0</div>
<!-- scrollbar -->
<div class="a" style="left:614.5px;top:58.5px;width:9.5px;height:579px;background:#f1f1f1"></div>
<div class="a" style="left:616.5px;top:66.8px;width:6.4px;height:367.8px;background:#c1c1c1"></div>
<svg class="a" style="left:614px;top:58px" width="10" height="579" viewBox="614 58 10 579"><path d="M618.2 64.3 L619.8 62.2 L621.4 64.3Z" fill="#a3a3a3"/><path d="M617.7 630.2 L620.9 630.2 L619.3 632.5Z" fill="#505050"/></svg>
<svg class="a" style="left:0;top:0" width="624" height="637" viewBox="0 0 624 637">
<!-- donut1 -->
<path fill="#8c8c8c" d="M405.50 150.60A40 40 0 0 1 426.93 156.83L420.61 166.79A28.2 28.2 0 0 0 405.50 162.40Z"/>
<path fill="#30c12b" d="M426.93 156.83A40 40 0 1 1 405.49 150.60L405.50 162.40A28.2 28.2 0 1 0 420.61 166.79Z"/>
<line x1="405.50" y1="163.40" x2="405.50" y2="149.60" stroke="#fff" stroke-width="2.2"/>
<line x1="420.07" y1="167.63" x2="427.47" y2="155.98" stroke="#fff" stroke-width="2.2"/>
<!-- donut2 -->
<path fill="#d9400a" d="M105.00 275.50A40 40 0 0 1 123.74 280.16L118.30 290.41A28.4 28.4 0 0 0 105.00 287.10Z"/>
<path fill="#f6a516" d="M123.74 280.16A40 40 0 0 1 130.90 285.01L123.39 293.85A28.4 28.4 0 0 0 118.30 290.41Z"/>
<path fill="#30c12b" d="M130.90 285.01A40 40 0 0 1 140.34 296.76L130.09 302.20A28.4 28.4 0 0 0 123.39 293.85Z"/>
<path fill="#a1a4a9" d="M140.34 296.76A40 40 0 1 1 104.99 275.50L105.00 287.10A28.4 28.4 0 1 0 130.09 302.20Z"/>
<line x1="105.00" y1="288.10" x2="105.00" y2="274.50" stroke="#fff" stroke-width="2.2"/>
<line x1="117.83" y1="291.29" x2="124.20" y2="279.28" stroke="#fff" stroke-width="2.2"/>
<line x1="122.74" y1="294.62" x2="131.54" y2="284.25" stroke="#fff" stroke-width="2.2"/>
<line x1="129.21" y1="302.67" x2="141.22" y2="296.30" stroke="#fff" stroke-width="2.2"/>
<!-- donut3 -->
<circle cx="405.6" cy="325.2" r="26.35" fill="none" stroke="#a1a4a9" stroke-width="8.5"/>
<line x1="405.9" y1="302" x2="405.9" y2="293" stroke="#fff" stroke-width="3.4"/>
<!-- alert icons -->
<circle cx="31.5" cy="183.7" r="4.3" fill="#d9400a"/>
<rect x="31" y="181" width="1" height="3.2" fill="#fff"/><rect x="31" y="185" width="1" height="1" fill="#fff"/>
<path d="M102.8 180 L107 187.2 L98.6 187.2 Z" fill="#f0991c" stroke="#f0991c" stroke-width="0.8" stroke-linejoin="round"/>
<rect x="102.4" y="182.2" width="0.9" height="2.6" fill="#fff"/><rect x="102.4" y="185.4" width="0.9" height="0.9" fill="#fff"/>
<circle cx="174.3" cy="183.7" r="4.1" fill="none" stroke="#888" stroke-width="0.8"/>
<rect x="173.9" y="182.6" width="0.8" height="3.2" fill="#888"/><rect x="173.9" y="181.1" width="0.8" height="0.8" fill="#888"/>
<!-- health info icon -->
<circle cx="453.8" cy="133.7" r="4.2" fill="#7c7f84"/>
<rect x="453.3" y="132.6" width="1" height="3.2" fill="#fff"/><rect x="453.3" y="131" width="1" height="1" fill="#fff"/>
<!-- filter icons -->
<g fill="#3d7fe0">
<rect x="168.9" y="395.6" width="7.1" height="1.6"/><rect x="170.3" y="397.7" width="4.3" height="1.5"/><rect x="171.7" y="399.7" width="1.7" height="1.5"/>
<rect x="552.1" y="395.6" width="7.3" height="1.6"/><rect x="553.6" y="397.7" width="4.3" height="1.5"/><rect x="555" y="399.7" width="1.7" height="1.5"/>
</g>
<!-- select chevrons -->
<g fill="none" stroke="#333" stroke-width="1.1">
<path d="M171 110.9 L172.8 112.7 L174.6 110.9"/>
<path d="M98.3 257.6 L100.1 259.4 L101.9 257.6"/>
<path d="M150.2 397.6 L152 399.4 L153.8 397.6"/>
<path d="M533.2 397.6 L535 399.4 L536.8 397.6"/>
</g>
<!-- toolbar icons -->
<g fill="none" stroke="#3572e0" stroke-width="1.1">
<path d="M570.2 81 V74.3 a1 1 0 0 1 1 -1 H575.4"/>
<rect x="572" y="75.2" width="5.6" height="7.3" rx="1"/>
</g>
<path d="M588.3 81.3 L592.3 77.3" stroke="#0b55d0" stroke-width="2.1" stroke-linecap="round"/><path d="M593.3 76.3 L594.7 74.9" stroke="#0b55d0" stroke-width="2.1"/>
<!-- header icons -->
<g>
<circle cx="515.6" cy="12.1" r="4.3" fill="#fff"/>
<path d="M515.7 9.1 Q515.2 10.6 515.8 11.6 Q516.5 12.6 517.6 12.3 M515.6 11.4 Q514.6 11.9 514.3 13 Q514.2 14 514.8 14.9" stroke="#0158c8" stroke-width="1.1" fill="none" stroke-linecap="round"/>
<circle cx="532.9" cy="12.1" r="3.4" fill="#fff"/>
<g fill="#fff"><rect x="532" y="7.6" width="1.8" height="9" rx="0.6"/><rect x="532" y="7.6" width="1.8" height="9" rx="0.6" transform="rotate(60 532.9 12.1)"/><rect x="532" y="7.6" width="1.8" height="9" rx="0.6" transform="rotate(120 532.9 12.1)"/></g>
<circle cx="532.9" cy="12.1" r="1.3" fill="#0158c8"/>
<circle cx="550.7" cy="12.1" r="2.1" fill="#fff"/>
<g stroke="#fff" stroke-width="0.9" stroke-linecap="round">
<line x1="550.7" y1="7.3" x2="550.7" y2="8.6"/><line x1="550.7" y1="15.6" x2="550.7" y2="16.9"/>
<line x1="545.9" y1="12.1" x2="547.2" y2="12.1"/><line x1="554.2" y1="12.1" x2="555.5" y2="12.1"/>
<line x1="547.3" y1="8.7" x2="548.2" y2="9.6"/><line x1="553.2" y1="14.6" x2="554.1" y2="15.5"/>
<line x1="547.3" y1="15.5" x2="548.2" y2="14.6"/><line x1="553.2" y1="9.6" x2="554.1" y2="8.7"/>
</g>
<path d="M565 15.5 h6.3 l-0.9 -1.2 v-2.3 a2.2 2.2 0 0 0 -4.5 0 v2.3 z" fill="#fff"/>
<circle cx="568.1" cy="16.4" r="0.9" fill="#fff"/>
<rect x="569" y="3.8" width="6.8" height="7.2" rx="1.6" fill="#1f8ef5"/>
<path d="M571.7 5.6 l1.1 -0.6 v4.6" stroke="#fff" stroke-width="0.9" fill="none"/>
<circle cx="585.9" cy="12.1" r="4.3" fill="#fff"/>
<path d="M584.4 10.9 a1.5 1.5 0 1 1 2.3 1.2 q-0.8 0.4 -0.8 1.2" stroke="#0158c8" stroke-width="1" fill="none"/>
<circle cx="585.9" cy="14.6" r="0.55" fill="#0158c8"/>
<circle cx="603.7" cy="12.1" r="4.3" fill="#fff"/>
<circle cx="603.7" cy="10.6" r="1.4" fill="#0158c8"/>
<path d="M601 14.9 a2.7 2.2 0 0 1 5.4 0 z" fill="#0158c8"/>
</g>
<!-- help side button -->
<path d="M606.2 149.7 H624 V168.5 H606.2 a1.5 1.5 0 0 1 -1.5 -1.5 V151.2 a1.5 1.5 0 0 1 1.5 -1.5z" fill="#3d3f42"/>
<circle cx="614.1" cy="159.1" r="5.8" fill="#fff"/>
<path d="M612.3 157.7 a1.8 1.8 0 1 1 2.7 1.5 q-0.9 0.5 -0.9 1.3" stroke="#3d3f42" stroke-width="1.1" fill="none"/>
<circle cx="614.1" cy="161.9" r="0.65" fill="#3d3f42"/>
<!-- map zoom -->
</svg>


<!-- donut numbers & legends -->
<div class="a" style="left:398.5px;top:184.7px;font-size:11.5px;line-height:12px;color:#4d5560;-webkit-text-stroke:0.25px #4d5560">91</div>
<div class="a" style="left:95.5px;top:309.7px;font-size:11.5px;line-height:12px;color:#4d5560;-webkit-text-stroke:0.25px #4d5560">116</div>
<div class="a" style="left:392.5px;top:319.7px;font-size:11.3px;line-height:12px;color:#4d5560;-webkit-text-stroke:0.25px #4d5560">1131</div>
<span class="dot" style="left:495.4px;top:180.6px;background:#f6a516"></span>
<span class="dot" style="left:495.4px;top:190.2px;background:#8c8c8c"></span>
<span class="dot" style="left:495.4px;top:199.8px;background:#30c12b"></span>
<div class="a lg" style="left:505px;top:178.8px;color:#585858"><b>0</b> Issues</div>
<div class="a lg" style="left:505px;top:188.4px;color:#585858"><b>9</b> Snoozed</div>
<div class="a lg" style="left:505px;top:198px;color:#585858"><b>91</b> Good health</div>
<span class="dot" style="left:194.8px;top:300.1px;background:#d9400a"></span>
<span class="dot" style="left:194.8px;top:310.1px;background:#f6a516"></span>
<span class="dot" style="left:194.8px;top:319.8px;background:#30c12b"></span>
<span class="dot" style="left:194.8px;top:329.8px;background:#a1a4a9"></span>
<div class="a lg" style="left:204.4px;top:298.5px;font-size:7.4px"><b>9</b> Critical</div>
<div class="a lg" style="left:204.4px;top:308.5px;font-size:7.4px"><b>4</b> Needs attention</div>
<div class="a lg" style="left:204.4px;top:318.2px;font-size:7.4px"><b>7</b> Good</div>
<div class="a lg" style="left:204.4px;top:328.2px;font-size:7.4px"><b>96</b> Unknown</div>
<span class="dot" style="left:495.8px;top:319.7px;background:#30c12b"></span>
<span class="dot" style="left:495.8px;top:329.6px;background:#a1a4a9"></span>
<div class="a lg" style="left:504.6px;top:317.8px;color:#585858"><b>5</b> Enabled</div>
<div class="a lg" style="left:504.6px;top:327.7px;color:#585858"><b>1126</b> Not enabled</div>

<!-- bottom card -->
<div class="card" style="left:11px;top:628.8px;width:593px;height:20px"></div>

<!-- clipboard fab -->
<svg class="a" style="left:0;top:590px" width="50" height="47" viewBox="0 590 50 47">
<circle cx="22.1" cy="614.4" r="14.9" fill="#3c3d3f"/>
<rect x="14.6" y="606.8" width="13.8" height="16.1" rx="1.2" fill="#fff"/>
<rect x="18.9" y="605.4" width="4.9" height="2.6" rx="1.1" fill="#3c3d3f"/>
<rect x="19.6" y="605.9" width="3.5" height="1.6" rx="0.7" fill="#fff"/>
<g stroke="#3c3d3f" stroke-width="0.9" fill="none">
<path d="M16.6 611.6 l0.9 0.9 l1.7 -1.7 M16.6 614.9 l0.9 0.9 l1.7 -1.7 M16.6 618.3 l0.9 0.9 l1.7 -1.7"/>
<path d="M21.2 612 H26.2 M21.2 615.2 H26.2 M21.2 618.6 H26.2" stroke-width="1"/>
</g>
<circle cx="34.2" cy="601.4" r="6" fill="#fff" stroke="#555" stroke-width="0.9"/>
<text x="34.2" y="603.6" text-anchor="middle" font-family="Liberation Sans" font-size="6" fill="#2c3e66">1</text>
</svg>
</body></html>
